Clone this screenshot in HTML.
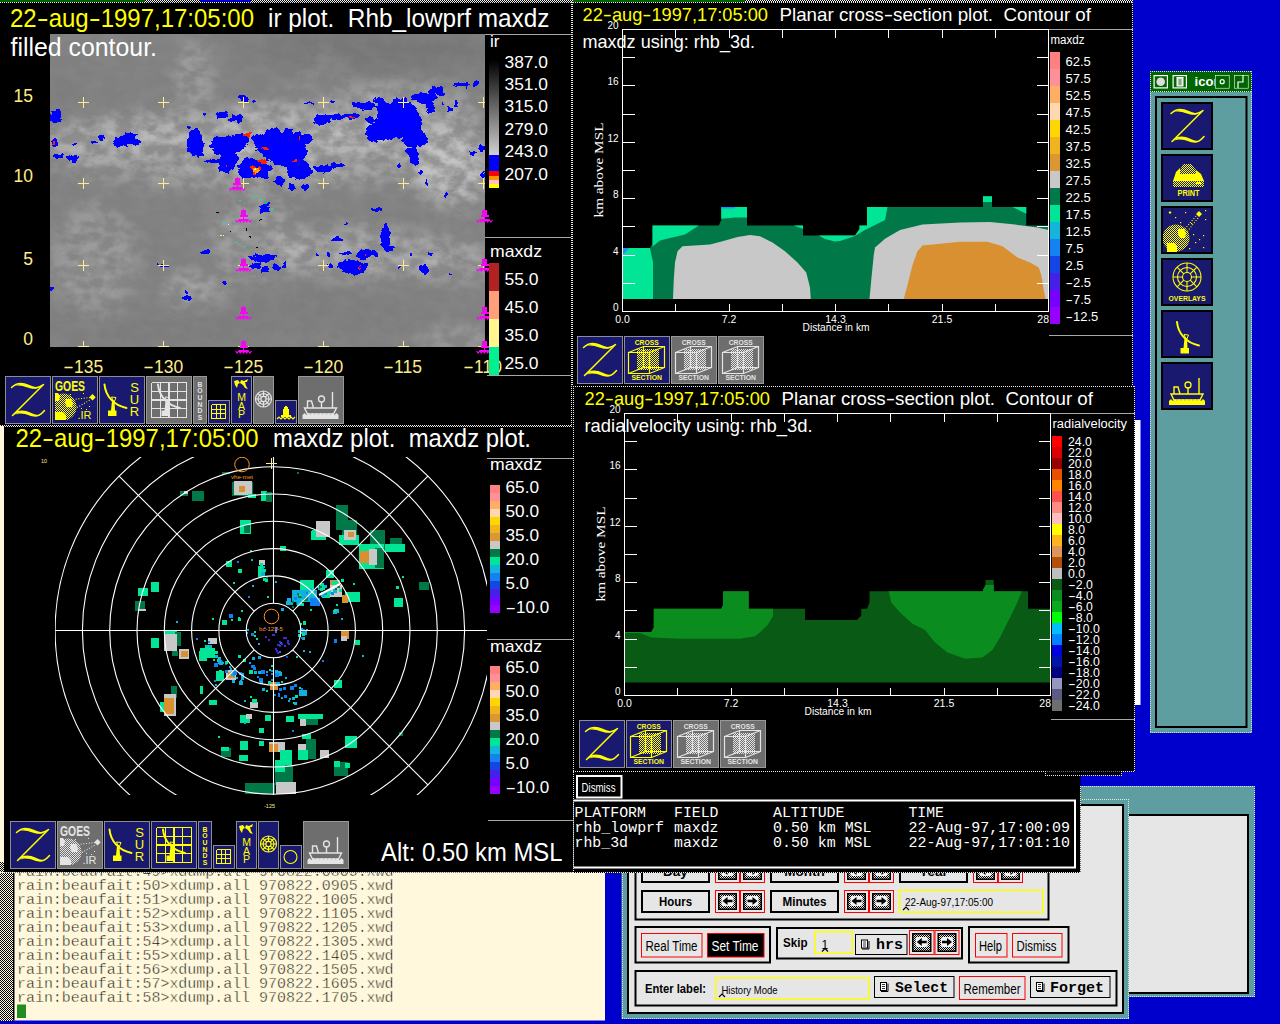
<!DOCTYPE html>
<html lang="en"><head><meta charset="utf-8"><title>zeb display</title>
<style>
html,body{margin:0;padding:0;background:#0000cd;overflow:hidden}
svg{display:block}
text{white-space:pre}
</style></head><body>
<svg width="1280" height="1024" viewBox="0 0 1280 1024">
<defs>
<pattern id="dy" width="2" height="2" patternUnits="userSpaceOnUse"><rect width="2" height="2" fill="none"/><rect width="1" height="1" fill="#ffff00"/><rect x="1" y="1" width="1" height="1" fill="#ffff00"/></pattern>
<pattern id="dg" width="2" height="2" patternUnits="userSpaceOnUse"><rect width="1" height="1" fill="#e4e4e4"/><rect x="1" y="1" width="1" height="1" fill="#e4e4e4"/></pattern>
<pattern id="sb" width="2" height="2" patternUnits="userSpaceOnUse"><rect width="2" height="2" fill="#fff8dc"/><rect width="1" height="1" fill="#000"/><rect x="1" y="1" width="1" height="1" fill="#000"/></pattern>
<pattern id="ab" width="2" height="2" patternUnits="userSpaceOnUse"><rect width="2" height="2" fill="#e6e6e6"/><rect width="1" height="1" fill="#000"/><rect x="1" y="1" width="1" height="1" fill="#000"/></pattern>
</defs>
<defs><pattern id="wd" width="2" height="2" patternUnits="userSpaceOnUse"><rect width="2" height="2" fill="#000"/><rect width="1" height="1" fill="#fff"/><rect x="1" y="1" width="1" height="1" fill="#fff"/></pattern></defs>
<rect x="0" y="0" width="1133" height="2" fill="url(#wd)" shape-rendering="crispEdges"/>
<rect x="0" y="0" width="145" height="2" fill="#006400" />
<rect x="200" y="0" width="51" height="2" fill="#0000cd" />
<rect x="573" y="0" width="172" height="2" fill="#006400" />
<rect x="0" y="426" width="605" height="594.5" fill="#fff8dc" />
<rect x="0" y="862" width="13" height="158.5" fill="url(#sb)" shape-rendering="crispEdges"/>
<rect x="13" y="873" width="1.5" height="147.5" fill="#000" />
<text x="17" y="875.5" font-size="15" fill="#000" font-family='"Liberation Mono", monospace' textLength="376.5" lengthAdjust="spacingAndGlyphs" stroke="#fff8dc" stroke-width="0.45" xml:space="preserve">rain:beaufait:49&gt;xdump.all 970822.0805.xwd</text>
<text x="17" y="889.5" font-size="15" fill="#000" font-family='"Liberation Mono", monospace' textLength="376.5" lengthAdjust="spacingAndGlyphs" stroke="#fff8dc" stroke-width="0.45" xml:space="preserve">rain:beaufait:50&gt;xdump.all 970822.0905.xwd</text>
<text x="17" y="903.5" font-size="15" fill="#000" font-family='"Liberation Mono", monospace' textLength="376.5" lengthAdjust="spacingAndGlyphs" stroke="#fff8dc" stroke-width="0.45" xml:space="preserve">rain:beaufait:51&gt;xdump.all 970822.1005.xwd</text>
<text x="17" y="917.5" font-size="15" fill="#000" font-family='"Liberation Mono", monospace' textLength="376.5" lengthAdjust="spacingAndGlyphs" stroke="#fff8dc" stroke-width="0.45" xml:space="preserve">rain:beaufait:52&gt;xdump.all 970822.1105.xwd</text>
<text x="17" y="931.5" font-size="15" fill="#000" font-family='"Liberation Mono", monospace' textLength="376.5" lengthAdjust="spacingAndGlyphs" stroke="#fff8dc" stroke-width="0.45" xml:space="preserve">rain:beaufait:53&gt;xdump.all 970822.1205.xwd</text>
<text x="17" y="945.5" font-size="15" fill="#000" font-family='"Liberation Mono", monospace' textLength="376.5" lengthAdjust="spacingAndGlyphs" stroke="#fff8dc" stroke-width="0.45" xml:space="preserve">rain:beaufait:54&gt;xdump.all 970822.1305.xwd</text>
<text x="17" y="959.5" font-size="15" fill="#000" font-family='"Liberation Mono", monospace' textLength="376.5" lengthAdjust="spacingAndGlyphs" stroke="#fff8dc" stroke-width="0.45" xml:space="preserve">rain:beaufait:55&gt;xdump.all 970822.1405.xwd</text>
<text x="17" y="973.5" font-size="15" fill="#000" font-family='"Liberation Mono", monospace' textLength="376.5" lengthAdjust="spacingAndGlyphs" stroke="#fff8dc" stroke-width="0.45" xml:space="preserve">rain:beaufait:56&gt;xdump.all 970822.1505.xwd</text>
<text x="17" y="987.5" font-size="15" fill="#000" font-family='"Liberation Mono", monospace' textLength="376.5" lengthAdjust="spacingAndGlyphs" stroke="#fff8dc" stroke-width="0.45" xml:space="preserve">rain:beaufait:57&gt;xdump.all 970822.1605.xwd</text>
<text x="17" y="1001.5" font-size="15" fill="#000" font-family='"Liberation Mono", monospace' textLength="376.5" lengthAdjust="spacingAndGlyphs" stroke="#fff8dc" stroke-width="0.45" xml:space="preserve">rain:beaufait:58&gt;xdump.all 970822.1705.xwd</text>
<rect x="17" y="1004.5" width="9" height="13.5" fill="#228b22" />
<rect x="1080" y="786" width="174.5" height="211" fill="#5f9ea0" />
<line x1="1080" y1="786.5" x2="1254.5" y2="786.5" stroke="#e0ecec" stroke-width="1" stroke-dasharray="1 1" shape-rendering="crispEdges"/>
<line x1="1254" y1="786" x2="1254" y2="997" stroke="#e0ecec" stroke-width="1" stroke-dasharray="1 1" shape-rendering="crispEdges"/>
<line x1="1080" y1="996.5" x2="1254.5" y2="996.5" stroke="#e0ecec" stroke-width="1" stroke-dasharray="1 1" shape-rendering="crispEdges"/>
<rect x="1128" y="815" width="120" height="178" fill="#e6e6e6" stroke="#000" stroke-width="2" />
<rect x="621.5" y="799" width="507.5" height="220" fill="#5f9ea0" />
<line x1="621.5" y1="1018.5" x2="1129" y2="1018.5" stroke="#e0ecec" stroke-width="1" stroke-dasharray="1 1" shape-rendering="crispEdges"/>
<line x1="1128.5" y1="799" x2="1128.5" y2="1019" stroke="#e0ecec" stroke-width="1" stroke-dasharray="1 1" shape-rendering="crispEdges"/>
<line x1="622" y1="799" x2="622" y2="1019" stroke="#e0ecec" stroke-width="1" stroke-dasharray="1 1" shape-rendering="crispEdges"/>
<line x1="1080" y1="799.5" x2="1129" y2="799.5" stroke="#e0ecec" stroke-width="1" stroke-dasharray="1 1" shape-rendering="crispEdges"/>
<rect x="628" y="805" width="495" height="208" fill="#e6e6e6" stroke="#000" stroke-width="2" />
<rect x="635.5" y="841" width="413" height="78.5" fill="none" stroke="#000" stroke-width="2" />
<rect x="642" y="861" width="67" height="21" fill="none" stroke="#000" stroke-width="2" />
<text x="675.5" y="876.3" font-size="13.5" fill="#000" font-family='"Liberation Sans", sans-serif' font-weight="bold" text-anchor="middle"  xml:space="preserve">Day</text>
<rect x="715.5" y="860.5" width="24" height="22" fill="none" stroke="#ff0000" stroke-width="1" />
<rect x="718.75" y="863.75" width="17.5" height="15.5" fill="url(#ab)" stroke="#000" stroke-width="1.5" />
<rect x="721.5" y="866" width="12" height="10" fill="#f4f4f4" rx="2"/>
<path d="M722.5 871 l5 -4 v2.7 h5 v2.6 h-5 v2.7z" fill="#000"/>
<rect x="740.5" y="860.5" width="24" height="22" fill="none" stroke="#ff0000" stroke-width="1" />
<rect x="743.75" y="863.75" width="17.5" height="15.5" fill="url(#ab)" stroke="#000" stroke-width="1.5" />
<rect x="746.5" y="866" width="12" height="10" fill="#f4f4f4" rx="2"/>
<path d="M757.5 871 l-5 -4 v2.7 h-5 v2.6 h5 v2.7z" fill="#000"/>
<rect x="771" y="861" width="67" height="21" fill="none" stroke="#000" stroke-width="2" />
<text x="804.5" y="876.3" font-size="13.5" fill="#000" font-family='"Liberation Sans", sans-serif' font-weight="bold" text-anchor="middle"  xml:space="preserve">Month</text>
<rect x="844.5" y="860.5" width="24" height="22" fill="none" stroke="#ff0000" stroke-width="1" />
<rect x="847.75" y="863.75" width="17.5" height="15.5" fill="url(#ab)" stroke="#000" stroke-width="1.5" />
<rect x="850.5" y="866" width="12" height="10" fill="#f4f4f4" rx="2"/>
<path d="M851.5 871 l5 -4 v2.7 h5 v2.6 h-5 v2.7z" fill="#000"/>
<rect x="869.5" y="860.5" width="24" height="22" fill="none" stroke="#ff0000" stroke-width="1" />
<rect x="872.75" y="863.75" width="17.5" height="15.5" fill="url(#ab)" stroke="#000" stroke-width="1.5" />
<rect x="875.5" y="866" width="12" height="10" fill="#f4f4f4" rx="2"/>
<path d="M886.5 871 l-5 -4 v2.7 h-5 v2.6 h5 v2.7z" fill="#000"/>
<rect x="900" y="861" width="67" height="21" fill="none" stroke="#000" stroke-width="2" />
<text x="933.5" y="876.3" font-size="13.5" fill="#000" font-family='"Liberation Sans", sans-serif' font-weight="bold" text-anchor="middle"  xml:space="preserve">Year</text>
<rect x="973.5" y="860.5" width="24" height="22" fill="none" stroke="#ff0000" stroke-width="1" />
<rect x="976.75" y="863.75" width="17.5" height="15.5" fill="url(#ab)" stroke="#000" stroke-width="1.5" />
<rect x="979.5" y="866" width="12" height="10" fill="#f4f4f4" rx="2"/>
<path d="M980.5 871 l5 -4 v2.7 h5 v2.6 h-5 v2.7z" fill="#000"/>
<rect x="998.5" y="860.5" width="24" height="22" fill="none" stroke="#ff0000" stroke-width="1" />
<rect x="1001.75" y="863.75" width="17.5" height="15.5" fill="url(#ab)" stroke="#000" stroke-width="1.5" />
<rect x="1004.5" y="866" width="12" height="10" fill="#f4f4f4" rx="2"/>
<path d="M1015.5 871 l-5 -4 v2.7 h-5 v2.6 h5 v2.7z" fill="#000"/>
<rect x="642" y="891" width="67" height="21" fill="none" stroke="#000" stroke-width="2" />
<text x="675.5" y="906.3" font-size="13.5" fill="#000" font-family='"Liberation Sans", sans-serif' textLength="33" lengthAdjust="spacingAndGlyphs" font-weight="bold" text-anchor="middle"  xml:space="preserve">Hours</text>
<rect x="715.5" y="890.5" width="24" height="22" fill="none" stroke="#ff0000" stroke-width="1" />
<rect x="718.75" y="893.75" width="17.5" height="15.5" fill="url(#ab)" stroke="#000" stroke-width="1.5" />
<rect x="721.5" y="896" width="12" height="10" fill="#f4f4f4" rx="2"/>
<path d="M722.5 901 l5 -4 v2.7 h5 v2.6 h-5 v2.7z" fill="#000"/>
<rect x="740.5" y="890.5" width="24" height="22" fill="none" stroke="#ff0000" stroke-width="1" />
<rect x="743.75" y="893.75" width="17.5" height="15.5" fill="url(#ab)" stroke="#000" stroke-width="1.5" />
<rect x="746.5" y="896" width="12" height="10" fill="#f4f4f4" rx="2"/>
<path d="M757.5 901 l-5 -4 v2.7 h-5 v2.6 h5 v2.7z" fill="#000"/>
<rect x="771" y="891" width="67" height="21" fill="none" stroke="#000" stroke-width="2" />
<text x="804.5" y="906.3" font-size="13.5" fill="#000" font-family='"Liberation Sans", sans-serif' textLength="44" lengthAdjust="spacingAndGlyphs" font-weight="bold" text-anchor="middle"  xml:space="preserve">Minutes</text>
<rect x="844.5" y="890.5" width="24" height="22" fill="none" stroke="#ff0000" stroke-width="1" />
<rect x="847.75" y="893.75" width="17.5" height="15.5" fill="url(#ab)" stroke="#000" stroke-width="1.5" />
<rect x="850.5" y="896" width="12" height="10" fill="#f4f4f4" rx="2"/>
<path d="M851.5 901 l5 -4 v2.7 h5 v2.6 h-5 v2.7z" fill="#000"/>
<rect x="869.5" y="890.5" width="24" height="22" fill="none" stroke="#ff0000" stroke-width="1" />
<rect x="872.75" y="893.75" width="17.5" height="15.5" fill="url(#ab)" stroke="#000" stroke-width="1.5" />
<rect x="875.5" y="896" width="12" height="10" fill="#f4f4f4" rx="2"/>
<path d="M886.5 901 l-5 -4 v2.7 h-5 v2.6 h5 v2.7z" fill="#000"/>
<rect x="899.75" y="890.25" width="143" height="22" fill="none" stroke="#ffff00" stroke-width="1.5" />
<text x="905" y="906" font-size="11.5" fill="#000" font-family='"Liberation Sans", sans-serif' textLength="88" lengthAdjust="spacingAndGlyphs"  xml:space="preserve">22-Aug-97,17:05:00</text>
<path d="M903 910 l3 -3 l3 3" fill="none" stroke="#000" stroke-width="1.2"/>
<rect x="635.5" y="927" width="134.5" height="35.5" fill="none" stroke="#000" stroke-width="2" />
<rect x="641.5" y="933.5" width="60.5" height="23.5" fill="none" stroke="#ff0000" stroke-width="1" />
<text x="645.5" y="951" font-size="14" fill="#000" font-family='"Liberation Sans", sans-serif' textLength="52" lengthAdjust="spacingAndGlyphs"  xml:space="preserve">Real Time</text>
<rect x="707.5" y="933.5" width="56.5" height="23.5" fill="#000" stroke="#ff0000" stroke-width="1" />
<text x="711.5" y="951" font-size="14" fill="#fff" font-family='"Liberation Sans", sans-serif' textLength="47" lengthAdjust="spacingAndGlyphs"  xml:space="preserve">Set Time</text>
<rect x="777" y="928" width="185" height="30.5" fill="none" stroke="#000" stroke-width="2" />
<text x="783" y="947" font-size="13.5" fill="#000" font-family='"Liberation Sans", sans-serif' textLength="24.5" lengthAdjust="spacingAndGlyphs" font-weight="bold"  xml:space="preserve">Skip</text>
<rect x="814.75" y="931.75" width="37.5" height="21.5" fill="none" stroke="#ffff00" stroke-width="1.5" />
<text x="821.5" y="949" font-size="12" fill="#000" font-family='"Liberation Sans", sans-serif'  xml:space="preserve">1</text>
<path d="M822 951.5 l3 -3 l3 3" fill="none" stroke="#000" stroke-width="1.2"/>
<rect x="855.5" y="934.5" width="51.5" height="20" fill="none" stroke="#000" stroke-width="1" />
<rect x="861.5" y="940" width="6" height="8" fill="#fff" stroke="#000" stroke-width="1" />
<path d="M863 942.0 h3 M863 944.0 h3 M863 946.0 h3" stroke="#000" stroke-width="0.8"/>
<path d="M862 949.0 h7 v-8" stroke="#000" stroke-width="1" fill="none"/>
<text x="876" y="949" font-size="15" fill="#000" font-family='"Liberation Mono", monospace' textLength="27" lengthAdjust="spacingAndGlyphs" font-weight="bold"  xml:space="preserve">hrs</text>
<rect x="909.5" y="930.5" width="24.5" height="24" fill="none" stroke="#ff0000" stroke-width="1" />
<rect x="912.75" y="933.75" width="18" height="17.5" fill="url(#ab)" stroke="#000" stroke-width="1.5" />
<rect x="915.75" y="937" width="12" height="10" fill="#f4f4f4" rx="2"/>
<path d="M916.75 942 l5 -4 v2.7 h5 v2.6 h-5 v2.7z" fill="#000"/>
<rect x="935" y="930.5" width="24" height="24" fill="none" stroke="#ff0000" stroke-width="1" />
<rect x="938.25" y="933.75" width="17.5" height="17.5" fill="url(#ab)" stroke="#000" stroke-width="1.5" />
<rect x="941" y="937" width="12" height="10" fill="#f4f4f4" rx="2"/>
<path d="M952 942 l-5 -4 v2.7 h-5 v2.6 h5 v2.7z" fill="#000"/>
<rect x="969" y="927" width="99.5" height="35.5" fill="none" stroke="#000" stroke-width="2" />
<rect x="975.5" y="933.5" width="31.5" height="23.5" fill="none" stroke="#ff0000" stroke-width="1" />
<text x="979" y="951" font-size="14" fill="#000" font-family='"Liberation Sans", sans-serif' textLength="23" lengthAdjust="spacingAndGlyphs"  xml:space="preserve">Help</text>
<rect x="1012.5" y="933.5" width="49.5" height="23.5" fill="none" stroke="#ff0000" stroke-width="1" />
<text x="1016.5" y="951" font-size="14" fill="#000" font-family='"Liberation Sans", sans-serif' textLength="40" lengthAdjust="spacingAndGlyphs"  xml:space="preserve">Dismiss</text>
<rect x="635.5" y="971" width="481" height="34.5" fill="none" stroke="#000" stroke-width="2" />
<text x="645" y="993" font-size="13.5" fill="#000" font-family='"Liberation Sans", sans-serif' textLength="61" lengthAdjust="spacingAndGlyphs" font-weight="bold"  xml:space="preserve">Enter label:</text>
<rect x="715.75" y="977.75" width="153" height="21.5" fill="none" stroke="#ffff00" stroke-width="1.5" />
<text x="721.5" y="993.5" font-size="11.5" fill="#000" font-family='"Liberation Sans", sans-serif' textLength="56" lengthAdjust="spacingAndGlyphs"  xml:space="preserve">History Mode</text>
<path d="M719 997 l3 -3 l3 3" fill="none" stroke="#000" stroke-width="1.2"/>
<rect x="874.5" y="976.5" width="79.5" height="21" fill="none" stroke="#000" stroke-width="1" />
<rect x="880.5" y="982.5" width="6" height="8" fill="#fff" stroke="#000" stroke-width="1" />
<path d="M882 984.5 h3 M882 986.5 h3 M882 988.5 h3" stroke="#000" stroke-width="0.8"/>
<path d="M881 991.5 h7 v-8" stroke="#000" stroke-width="1" fill="none"/>
<text x="895" y="991.5" font-size="15" fill="#000" font-family='"Liberation Mono", monospace' textLength="53" lengthAdjust="spacingAndGlyphs" font-weight="bold"  xml:space="preserve">Select</text>
<rect x="959.5" y="976.5" width="65.5" height="23" fill="none" stroke="#ff0000" stroke-width="1" />
<text x="963.5" y="994" font-size="14" fill="#000" font-family='"Liberation Sans", sans-serif' textLength="57" lengthAdjust="spacingAndGlyphs"  xml:space="preserve">Remember</text>
<rect x="1030.5" y="976.5" width="79.5" height="21" fill="none" stroke="#000" stroke-width="1" />
<rect x="1036.5" y="982.5" width="6" height="8" fill="#fff" stroke="#000" stroke-width="1" />
<path d="M1038 984.5 h3 M1038 986.5 h3 M1038 988.5 h3" stroke="#000" stroke-width="0.8"/>
<path d="M1037 991.5 h7 v-8" stroke="#000" stroke-width="1" fill="none"/>
<text x="1050" y="991.5" font-size="15" fill="#000" font-family='"Liberation Mono", monospace' textLength="54" lengthAdjust="spacingAndGlyphs" font-weight="bold"  xml:space="preserve">Forget</text>
<rect x="573" y="771" width="507.5" height="102" fill="#000" />
<line x1="573" y1="872.5" x2="1080.5" y2="872.5" stroke="#e8e8e8" stroke-width="1" stroke-dasharray="1 1" shape-rendering="crispEdges"/>
<line x1="1080" y1="786" x2="1080" y2="873" stroke="#e8e8e8" stroke-width="1" stroke-dasharray="1 1" shape-rendering="crispEdges"/>
<rect x="573" y="800.5" width="502" height="67" fill="none" stroke="#fff" stroke-width="2" />
<rect x="577" y="776" width="44.5" height="21.5" fill="none" stroke="#fff" stroke-width="2" />
<text x="581.5" y="791.5" font-size="12.5" fill="#fff" font-family='"Liberation Sans", sans-serif' textLength="34" lengthAdjust="spacingAndGlyphs"  xml:space="preserve">Dismiss</text>
<text x="574.5" y="817" font-size="15" fill="#fff" font-family='"Liberation Mono", monospace' textLength="71.5" lengthAdjust="spacingAndGlyphs"  xml:space="preserve">PLATFORM</text>
<text x="674" y="817" font-size="15" fill="#fff" font-family='"Liberation Mono", monospace' textLength="44.5" lengthAdjust="spacingAndGlyphs"  xml:space="preserve">FIELD</text>
<text x="773" y="817" font-size="15" fill="#fff" font-family='"Liberation Mono", monospace' textLength="71.5" lengthAdjust="spacingAndGlyphs"  xml:space="preserve">ALTITUDE</text>
<text x="908.5" y="817" font-size="15" fill="#fff" font-family='"Liberation Mono", monospace' textLength="35.5" lengthAdjust="spacingAndGlyphs"  xml:space="preserve">TIME</text>
<text x="574.5" y="832" font-size="15" fill="#fff" font-family='"Liberation Mono", monospace' textLength="89.5" lengthAdjust="spacingAndGlyphs"  xml:space="preserve">rhb_lowprf</text>
<text x="674" y="832" font-size="15" fill="#fff" font-family='"Liberation Mono", monospace' textLength="44.5" lengthAdjust="spacingAndGlyphs"  xml:space="preserve">maxdz</text>
<text x="773" y="832" font-size="15" fill="#fff" font-family='"Liberation Mono", monospace' textLength="98.5" lengthAdjust="spacingAndGlyphs"  xml:space="preserve">0.50 km MSL</text>
<text x="908.5" y="832" font-size="15" fill="#fff" font-family='"Liberation Mono", monospace' textLength="161.5" lengthAdjust="spacingAndGlyphs"  xml:space="preserve">22-Aug-97,17:00:09</text>
<text x="574.5" y="847" font-size="15" fill="#fff" font-family='"Liberation Mono", monospace' textLength="53.5" lengthAdjust="spacingAndGlyphs"  xml:space="preserve">rhb_3d</text>
<text x="674" y="847" font-size="15" fill="#fff" font-family='"Liberation Mono", monospace' textLength="44.5" lengthAdjust="spacingAndGlyphs"  xml:space="preserve">maxdz</text>
<text x="773" y="847" font-size="15" fill="#fff" font-family='"Liberation Mono", monospace' textLength="98.5" lengthAdjust="spacingAndGlyphs"  xml:space="preserve">0.50 km MSL</text>
<text x="908.5" y="847" font-size="15" fill="#fff" font-family='"Liberation Mono", monospace' textLength="161.5" lengthAdjust="spacingAndGlyphs"  xml:space="preserve">22-Aug-97,17:01:10</text>
<rect x="1135" y="420" width="5.5" height="285" fill="#fff" />
<rect x="1150" y="71" width="102" height="21" fill="#006400" />
<rect x="1150" y="92" width="102" height="641" fill="#5f9ea0" />
<line x1="1150" y1="71.5" x2="1252" y2="71.5" stroke="#d8e8d8" stroke-width="1" stroke-dasharray="1 1" shape-rendering="crispEdges"/>
<line x1="1150.5" y1="71" x2="1150.5" y2="733" stroke="#d0e0e0" stroke-width="1" stroke-dasharray="1 1" shape-rendering="crispEdges"/>
<line x1="1251.5" y1="71" x2="1251.5" y2="733" stroke="#d0e0e0" stroke-width="1" stroke-dasharray="1 1" shape-rendering="crispEdges"/>
<line x1="1150" y1="732.5" x2="1252" y2="732.5" stroke="#d0e0e0" stroke-width="1" stroke-dasharray="1 1" shape-rendering="crispEdges"/>
<line x1="1150" y1="91.5" x2="1252" y2="91.5" stroke="#d8e8d8" stroke-width="1" stroke-dasharray="1 1" shape-rendering="crispEdges"/>
<rect x="1154.1" y="75.6" width="13.3" height="12.3" fill="none" stroke="#fff" stroke-width="1.2" />
<rect x="1173.1" y="75.6" width="13.3" height="12.3" fill="none" stroke="#fff" stroke-width="1.2" />
<rect x="1215.6" y="75.6" width="13.3" height="12.3" fill="none" stroke="#fff" stroke-width="1.2" />
<rect x="1234.6" y="75.6" width="13.3" height="12.3" fill="none" stroke="#fff" stroke-width="1.2" />
<circle cx="1160.7" cy="81.7" r="4.3" fill="#dcdcdc"/>
<rect x="1177" y="77.5" width="6" height="8.5" fill="#dcdcdc" stroke="#fff" stroke-width="1" />
<path d="M1178.5 80 h3 M1178.5 82 h3 M1178.5 84 h3" stroke="#006400" stroke-width="0.8"/>
<text x="1194.5" y="86" font-size="13" fill="#fff" font-family='"Liberation Sans", sans-serif' textLength="27" lengthAdjust="spacingAndGlyphs" font-weight="bold"  xml:space="preserve">icon</text>
<rect x="1215.6" y="75.6" width="13.3" height="12.3" fill="#006400" />
<circle cx="1222.2" cy="81.7" r="2" fill="none" stroke="#fff" stroke-width="1.2"/>
<rect x="1234.6" y="75.6" width="13.3" height="12.3" fill="#006400" />
<path d="M1238 88 V82 H1243 V75" fill="none" stroke="#fff" stroke-width="1.2"/>
<rect x="1156" y="97" width="90.5" height="630" fill="none" stroke="#000" stroke-width="2" />
<rect x="1161" y="102" width="52" height="48" fill="#000" />
<rect x="1163" y="104" width="48" height="44" fill="#191970" />
<g transform="translate(1165 102.5) scale(1 1)">
<path d="M6 11 C11 6 17 6 23 9 S32 12 38 8 L7 39 C13 33 19 34 25 37 S34 40 39 34" fill="none" stroke="#ffff00" stroke-width="1.5" stroke-linejoin="round" stroke-linecap="round"/>
<path d="M9 9.5 C14 6.5 18 7 23 9 S31 11.5 36 9.5 C31 13.5 27 12.5 22 11 S14 8.5 9 9.5Z M10 38 C14 34 19 34.5 25 37 S33 39.5 37 36.5 C33 41.5 28 40.5 24 39 S14 36 10 38Z" fill="#ffff00"/>
</g>
<rect x="1161" y="154" width="52" height="48" fill="#000" />
<rect x="1163" y="156" width="48" height="44" fill="#191970" />
<g transform="translate(1165 155) scale(1 1)">
<path d="M18 9 H26 L31 15 V19 H15 V15 Z" fill="url(#dy)"/>
<path d="M11 17 L15 13 V19 H31 V15 L36 19 L39 26 H8 Z" fill="#ffff00"/>
<rect x="8" y="26" width="31" height="6" fill="url(#dy)"/>
<rect x="31" y="27" width="5" height="2" fill="#ffff00"/>
<text x="23.5" y="41" font-size="8.5" font-weight="bold" font-family='"Liberation Sans", sans-serif' fill="#ffff00" text-anchor="middle" textLength="22" lengthAdjust="spacingAndGlyphs">PRINT</text>
</g>
<rect x="1161" y="206" width="52" height="48" fill="#000" />
<rect x="1163" y="208" width="48" height="44" fill="#191970" />
<g transform="translate(1163 208) scale(1 1)">
<defs><clipPath id="spc"><rect x="0" y="0" width="48" height="44"/></clipPath></defs><g clip-path="url(#spc)">
<circle cx="13" cy="30" r="13.5" fill="url(#dy)"/>
<path d="M4 35 h8 l2 3 v6 h-10z M15 21 h6 l2 4 l-1 5 h-5 l-2 -4z" fill="#ffff00"/>
<path d="M33 8 L21 22 M35 10 L24 24" stroke="#ffff00" stroke-width="1.1" stroke-dasharray="1 1.7" fill="none"/>
<path d="M36 3 l3 3 l-3 3 l-3 -3z M7 3 l1.5 1.5 l-1.5 1.5 l-1.5 -1.5z" fill="#ffff00"/>
<rect x="22" y="4" width="1.2" height="1.2" fill="#ffff00"/>
<rect x="42" y="2" width="1.2" height="1.2" fill="#ffff00"/>
<rect x="42" y="11" width="1.2" height="1.2" fill="#ffff00"/>
<rect x="40" y="27" width="1.2" height="1.2" fill="#ffff00"/>
<rect x="36" y="31" width="1.2" height="1.2" fill="#ffff00"/>
<rect x="30" y="26" width="1.2" height="1.2" fill="#ffff00"/>
<rect x="40" y="39" width="1.2" height="1.2" fill="#ffff00"/>
<rect x="32" y="34" width="1.2" height="1.2" fill="#ffff00"/>
<rect x="17" y="14" width="1.2" height="1.2" fill="#ffff00"/>
<rect x="26" y="40" width="1.2" height="1.2" fill="#ffff00"/>
<rect x="28" y="15" width="1.2" height="1.2" fill="#ffff00"/>
<rect x="12" y="9" width="1.2" height="1.2" fill="#ffff00"/>
</g>
</g>
<rect x="1161" y="258" width="52" height="48" fill="#000" />
<rect x="1163" y="260" width="48" height="44" fill="#191970" />
<g transform="translate(1165 258) scale(1 1)">
<g fill="none" stroke="#ffff00" stroke-width="1.1"><circle cx="22" cy="19" r="14"/><circle cx="22" cy="19" r="9.52"/><circle cx="22" cy="19" r="4.48"/>
<path d="M26.5 19.0 L36.0 19.0 M25.2 22.2 L31.9 28.9 M22.0 23.5 L22.0 33.0 M18.8 22.2 L12.1 28.9 M17.5 19.0 L8.0 19.0 M18.8 15.8 L12.1 9.1 M22.0 14.5 L22.0 5.0 M25.2 15.8 L31.9 9.1 "/></g>
<text x="22" y="42.5" font-size="8" fill="#ffff00" font-family='"Liberation Sans", sans-serif' textLength="37" lengthAdjust="spacingAndGlyphs" font-weight="bold" text-anchor="middle"  xml:space="preserve">OVERLAYS</text>
</g>
<rect x="1161" y="310" width="52" height="48" fill="#000" />
<rect x="1163" y="312" width="48" height="44" fill="#191970" />
<g transform="translate(1162 314) scale(1 1)">
<path d="M15 8 C16 19 24 29 37 31.5" fill="none" stroke="#ffff00" stroke-width="2" stroke-linecap="round"/>
<path d="M22 20.5 L26.5 21 L24.5 26 Z" fill="none" stroke="#ffff00" stroke-width="1"/>
<path d="M22.5 24 L25 24 L25.5 34 L27 34 L27 39.5 L18.5 39.5 L18.5 34 L21.5 34 Z" fill="#ffff00"/>
</g>
<rect x="1161" y="362" width="52" height="48" fill="#000" />
<rect x="1163" y="364" width="48" height="44" fill="#191970" />
<g transform="translate(1165 363) scale(1 1)">
<g transform="translate(0 0)">
<path d="M6 31 H38 L35 37 H9 Z" fill="none" stroke="#ffff00" stroke-width="1.4"/>
<path d="M9 31 V24 H13 L15 31" fill="none" stroke="#ffff00" stroke-width="1.4"/>
<circle cx="23" cy="22" r="3" fill="none" stroke="#ffff00" stroke-width="1.3"/>
<path d="M23 25 V31 M34 15 V31" stroke="#ffff00" stroke-width="1.4" fill="none"/>
<path d="M4 42 V38 l2 -2 l2 2 l2 -2 l2 2 l2 -2 l2 2 l2 -2 l2 2 l2 -2 l2 2 l2 -2 l2 2 l2 -2 l2 2 l2 -2 l2 2 l2 -2 l2 2 V42 Z" fill="#ffff00"/>
</g>
</g>
<rect x="0" y="2" width="573" height="424" fill="#000" />
<line x1="571.5" y1="2" x2="571.5" y2="426" stroke="#e8e8e8" stroke-width="1" stroke-dasharray="1 1" shape-rendering="crispEdges"/>
<line x1="0" y1="425.5" x2="572" y2="425.5" stroke="#e8e8e8" stroke-width="1" stroke-dasharray="1 1" shape-rendering="crispEdges"/>
<line x1="0" y1="2.5" x2="572" y2="2.5" stroke="#e8e8e8" stroke-width="1" stroke-dasharray="1 1" shape-rendering="crispEdges"/>
<defs><clipPath id="irclip"><rect x="50" y="34" width="435" height="313"/></clipPath>
<filter id="cloud" x="0" y="0" width="100%" height="100%" filterUnits="objectBoundingBox" color-interpolation-filters="sRGB">
<feTurbulence type="fractalNoise" baseFrequency="0.06 0.09" numOctaves="4" seed="3" result="n"/>
<feColorMatrix in="n" type="matrix" values="0 0 0 0 1  0 0 0 0 1  0 0 0 0 1  2.6 0 0 0 -0.85" result="a"/>
<feComposite in="SourceGraphic" in2="a" operator="in"/>
</filter>
<filter id="rag" x="-5%" y="-5%" width="110%" height="110%"><feTurbulence type="fractalNoise" baseFrequency="0.13" numOctaves="2" seed="4" result="t"/><feDisplacementMap in="SourceGraphic" in2="t" scale="7" xChannelSelector="R" yChannelSelector="G"/></filter>
<filter id="bl6" x="-100%" y="-100%" width="300%" height="300%"><feGaussianBlur stdDeviation="6"/></filter>
<filter id="bl10" x="-100%" y="-100%" width="300%" height="300%"><feGaussianBlur stdDeviation="10"/></filter>
</defs>
<g clip-path="url(#irclip)">
<g>
<rect x="50" y="34" width="435" height="313" fill="#808080" />
<ellipse cx="381.4" cy="49.8" rx="118.6" ry="21.6" fill="#767676" opacity="0.85" filter="url(#bl10)"/>
<ellipse cx="255.6" cy="44.4" rx="43.1" ry="10.8" fill="#7a7a7a" opacity="0.5" filter="url(#bl10)"/>
<ellipse cx="147.8" cy="328.3" rx="107.8" ry="18.0" fill="#7a7a7a" opacity="0.6" filter="url(#bl10)"/>
<ellipse cx="327.5" cy="313.9" rx="107.8" ry="18.0" fill="#7c7c7c" opacity="0.6" filter="url(#bl10)"/>
<ellipse cx="68.8" cy="94.7" rx="21.6" ry="18.0" fill="#7a7a7a" opacity="0.5" filter="url(#bl10)"/>
<ellipse cx="270.0" cy="148.6" rx="230.0" ry="39.5" fill="#a4a4a4" opacity="0.275" filter="url(#bl10)"/>
<ellipse cx="453.3" cy="173.8" rx="43.1" ry="32.3" fill="#a4a4a4" opacity="0.45" filter="url(#bl10)"/>
<ellipse cx="399.4" cy="123.4" rx="79.1" ry="32.3" fill="#a4a4a4" opacity="0.3" filter="url(#bl10)"/>
<ellipse cx="270.0" cy="137.8" rx="71.9" ry="32.3" fill="#a4a4a4" opacity="0.25" filter="url(#bl10)"/>
<ellipse cx="194.5" cy="76.7" rx="18.0" ry="39.5" fill="#a4a4a4" opacity="0.225" filter="url(#bl10)"/>
<ellipse cx="129.8" cy="137.8" rx="79.1" ry="16.2" fill="#a4a4a4" opacity="0.25" filter="url(#bl10)"/>
<ellipse cx="356.2" cy="252.8" rx="86.2" ry="25.2" fill="#a4a4a4" opacity="0.3" filter="url(#bl10)"/>
<ellipse cx="255.6" cy="238.4" rx="46.7" ry="43.1" fill="#a4a4a4" opacity="0.2" filter="url(#bl10)"/>
<ellipse cx="194.5" cy="288.8" rx="32.3" ry="18.0" fill="#a4a4a4" opacity="0.25" filter="url(#bl10)"/>
<ellipse cx="93.9" cy="260.0" rx="43.1" ry="57.5" fill="#a4a4a4" opacity="0.175" filter="url(#bl10)"/>
<ellipse cx="453.3" cy="260.0" rx="43.1" ry="21.6" fill="#a4a4a4" opacity="0.25" filter="url(#bl10)"/>
<ellipse cx="453.3" cy="339.1" rx="43.1" ry="9.0" fill="#a4a4a4" opacity="0.25" filter="url(#bl10)"/>
<ellipse cx="327.5" cy="65.9" rx="21.6" ry="9.0" fill="#a4a4a4" opacity="0.125" filter="url(#bl10)"/>
<ellipse cx="381.4" cy="94.7" rx="107.8" ry="10.8" fill="#a4a4a4" opacity="0.15" filter="url(#bl10)"/>
</g>
<g filter="url(#cloud)">
<rect x="50" y="34" width="435" height="313" fill="#d0d0d0" opacity="0.06"/>
<ellipse cx="270.0" cy="148.6" rx="230.0" ry="39.5" fill="#d0d0d0" opacity="0.396" filter="url(#bl10)"/>
<ellipse cx="453.3" cy="173.8" rx="43.1" ry="32.3" fill="#d0d0d0" opacity="0.648" filter="url(#bl10)"/>
<ellipse cx="399.4" cy="123.4" rx="79.1" ry="32.3" fill="#d0d0d0" opacity="0.432" filter="url(#bl10)"/>
<ellipse cx="270.0" cy="137.8" rx="71.9" ry="32.3" fill="#d0d0d0" opacity="0.36" filter="url(#bl10)"/>
<ellipse cx="194.5" cy="76.7" rx="18.0" ry="39.5" fill="#d0d0d0" opacity="0.324" filter="url(#bl10)"/>
<ellipse cx="129.8" cy="137.8" rx="79.1" ry="16.2" fill="#d0d0d0" opacity="0.36" filter="url(#bl10)"/>
<ellipse cx="356.2" cy="252.8" rx="86.2" ry="25.2" fill="#d0d0d0" opacity="0.432" filter="url(#bl10)"/>
<ellipse cx="255.6" cy="238.4" rx="46.7" ry="43.1" fill="#d0d0d0" opacity="0.288" filter="url(#bl10)"/>
<ellipse cx="194.5" cy="288.8" rx="32.3" ry="18.0" fill="#d0d0d0" opacity="0.36" filter="url(#bl10)"/>
<ellipse cx="93.9" cy="260.0" rx="43.1" ry="57.5" fill="#d0d0d0" opacity="0.252" filter="url(#bl10)"/>
<ellipse cx="453.3" cy="260.0" rx="43.1" ry="21.6" fill="#d0d0d0" opacity="0.36" filter="url(#bl10)"/>
<ellipse cx="453.3" cy="339.1" rx="43.1" ry="9.0" fill="#d0d0d0" opacity="0.36" filter="url(#bl10)"/>
<ellipse cx="327.5" cy="65.9" rx="21.6" ry="9.0" fill="#d0d0d0" opacity="0.18" filter="url(#bl10)"/>
<ellipse cx="381.4" cy="94.7" rx="107.8" ry="10.8" fill="#d0d0d0" opacity="0.216" filter="url(#bl10)"/>
</g>
<g shape-rendering="crispEdges" filter="url(#rag)">
<polygon points="305,145 306,147 303,148 302,150 301,151 297,152 298,153 297,155 296,157 292,156 292,158 289,158 289,162 287,162 284,161 282,165 279,165 276,164 274,164 272,161 270,160 267,161 266,158 265,157 263,156 263,154 260,153 259,152 256,151 257,149 256,148 256,147 254,145 254,143 255,142 251,139 252,137 253,136 255,134 259,134 261,133 263,132 266,132 266,129 270,130 271,128 275,130 276,128 279,128 281,132 283,131 286,129 288,130 292,129 292,131 294,133 298,132 301,133 301,135 301,137 303,138 308,139 307,141 303,143" fill="#0000ff"/>
<polygon points="245,145 245,146 246,148 242,149 242,150 239,151 236,151 235,152 232,152 230,153 228,153 225,154 222,154 219,153 215,154 213,153 213,151 210,150 212,148 211,147 209,146 210,144 212,143 209,141 212,141 213,139 213,137 216,137 219,137 222,137 225,137 228,136 230,137 233,137 234,138 237,139 240,139 241,140 244,141 247,142 245,144" fill="#0000ff"/>
<polygon points="238,159 238,162 236,164 235,166 234,168 233,170 231,169 230,172 228,172 227,172 225,172 224,171 222,170 220,170 220,166 219,164 220,161 219,159 220,156 220,154 221,152 221,149 222,148 224,146 225,144 227,143 228,144 230,146 232,146 232,150 233,151 234,152 236,154 236,156" fill="#0000ff"/>
<polygon points="272,169 272,171 270,172 269,174 269,176 267,177 264,177 261,177 259,178 257,177 254,178 252,178 249,180 246,179 243,179 243,177 239,176 239,175 237,173 239,171 236,170 240,169 239,167 239,166 239,164 240,163 242,162 243,160 246,159 249,160 252,159 255,159 257,159 259,161 262,161 264,162 265,163 267,164 268,165 271,166 272,168" fill="#0000ff"/>
<polygon points="311,169 312,172 311,174 309,176 307,177 305,178 303,179 301,179 299,180 298,178 295,180 294,178 291,178 290,176 290,173 289,172 290,169 290,168 290,165 292,164 293,163 294,161 295,159 297,159 299,159 302,158 304,160 305,161 307,162 307,164 309,166 309,168" fill="#0000ff"/>
<polygon points="307,154 306,156 305,158 302,158 301,160 299,161 297,162 297,164 295,166 293,167 291,167 288,168 285,167 283,166 281,166 279,164 278,162 276,161 275,160 274,158 274,157 271,156 270,154 271,152 273,151 273,149 271,146 275,146 275,144 278,143 281,143 283,142 286,144 288,144 290,143 292,145 295,143 296,145 298,145 300,146 304,147 305,149 306,150 307,152" fill="#0000ff"/>
<polygon points="312,140 311,141 309,142 308,143 305,143 303,142 300,143 297,142 297,140 297,139 299,138 300,136 302,136 305,135 308,135 309,137 311,138" fill="#0000ff"/>
<polygon points="219,162 222,163 219,164 215,164 212,164 210,164 206,164 205,163 204,162 204,160 207,159 209,159 212,159 216,159 217,160 220,160" fill="#0000ff"/>
<polygon points="285,181 285,182 283,183 281,185 278,184 275,184 273,182 272,181 274,180 275,178 277,177 280,178 282,179 284,180" fill="#0000ff"/>
<polygon points="297,187 295,188 294,189 292,191 290,189 287,188 287,187 287,185 289,184 292,184 294,184 296,185" fill="#0000ff"/>
<polygon points="308,187 308,189 306,190 304,190 301,189 301,187 300,186 302,184 304,184 306,183 308,185" fill="#0000ff"/>
<polygon points="335,168 333,169 331,170 329,171 328,172 324,172 321,171 317,171 315,170 315,169 313,168 315,167 315,166 318,166 321,165 324,166 327,165 330,166 333,166 335,167" fill="#0000ff"/>
<polygon points="344,165 343,166 341,167 338,167 335,167 333,166 331,165 333,164 335,163 338,164 341,163 345,164" fill="#0000ff"/>
<polygon points="243,118 243,120 242,121 240,122 237,123 235,121 232,122 231,121 228,120 228,118 228,117 231,116 232,115 234,114 237,115 240,114 241,116 243,117" fill="#0000ff"/>
<polygon points="227,115 227,116 225,117 223,118 220,118 217,118 217,116 217,115 216,113 217,112 220,111 223,111 225,112 228,113" fill="#0000ff"/>
<polygon points="249,98 248,100 246,102 244,102 241,102 239,102 239,99 238,97 239,95 241,95 244,95 246,95 247,97" fill="#0000ff"/>
<polygon points="258,102 256,103 254,104 252,103 251,102 252,101 254,100 256,101" fill="#0000ff"/>
<polygon points="207,113 207,115 205,116 204,115 203,113 204,112 205,111 206,112" fill="#0000ff"/>
<polygon points="189,127 189,128 187,129 186,128 185,127 186,126 187,125 188,126" fill="#0000ff"/>
<polygon points="283,136 283,138 279,139 278,140 279,142 275,142 272,142 269,141 267,141 264,141 262,140 259,140 260,138 256,137 256,136 260,135 261,134 262,132 265,132 267,132 269,131 272,130 274,132 279,131 280,132 281,134 282,135" fill="#0000ff"/>
<polygon points="248,138 248,139 247,140 246,142 243,143 240,141 237,142 235,140 233,139 232,138 233,136 234,135 237,134 240,134 243,134 246,134 248,135 250,136" fill="#0000ff"/>
<polygon points="203,142 204,145 203,147 202,150 202,152 200,154 198,153 197,156 196,155 195,155 193,156 192,155 190,154 189,152 187,151 187,148 187,145 187,142 187,139 189,138 189,135 189,133 191,131 192,129 193,129 194,128 196,127 197,129 199,131 200,131 201,133 201,135 203,137 203,140" fill="#0000ff"/>
<polygon points="204,153 204,155 201,156 199,157 197,157 195,155 193,154 195,152 195,150 197,149 199,149 201,150 202,152" fill="#0000ff"/>
<polygon points="420,120 421,122 422,124 421,126 420,127 421,130 420,132 417,133 417,135 414,135 411,135 409,136 407,136 405,136 404,139 401,137 399,139 397,138 396,135 393,139 391,138 390,135 386,137 385,135 383,134 379,134 380,131 378,130 375,129 375,126 376,124 374,122 375,120 377,118 380,116 379,114 381,113 383,112 385,111 384,109 386,109 387,106 387,104 389,103 391,103 393,100 395,100 397,98 399,99 402,97 405,97 407,99 408,102 409,104 413,102 414,104 415,106 415,109 415,111 418,111 418,113 419,115 420,116 421,118" fill="#0000ff"/>
<polygon points="400,132 403,134 402,136 400,137 395,137 393,138 391,139 389,140 388,141 385,140 383,142 380,141 378,141 374,142 371,142 369,141 367,139 366,138 366,136 365,135 364,134 364,132 367,131 367,130 365,128 366,127 367,125 370,125 372,123 374,123 377,122 380,123 383,122 386,122 387,124 390,125 392,125 395,126 395,127 397,128 398,130 402,131" fill="#0000ff"/>
<polygon points="425,138 427,140 426,142 425,144 423,145 421,146 418,145 417,146 415,147 413,146 411,147 408,148 406,147 404,145 403,143 402,142 401,140 403,138 404,136 403,134 404,133 404,131 406,129 408,127 410,127 412,126 415,128 417,128 419,129 421,130 423,131 423,133 424,134 425,136" fill="#0000ff"/>
<polygon points="415,110 414,111 412,112 412,113 411,114 408,115 407,116 404,116 401,116 399,118 396,119 393,118 390,118 387,118 384,118 381,117 378,116 378,115 376,114 379,112 376,111 374,110 377,109 377,108 374,107 374,105 378,105 378,103 382,103 384,102 387,102 391,102 393,103 396,102 399,103 402,103 403,104 406,104 411,104 412,105 414,106 415,107 417,108" fill="#0000ff"/>
<polygon points="420,154 419,157 419,160 418,162 417,164 415,165 413,164 411,163 410,162 409,159 408,157 407,154 407,151 409,150 410,148 412,148 413,145 415,144 416,146 417,148 418,150 419,152" fill="#0000ff"/>
<polygon points="403,165 401,166 400,168 398,167 397,166 397,164 398,162 400,162 401,163" fill="#0000ff"/>
<polygon points="438,98 433,99 433,100 432,101 431,102 429,103 426,104 423,104 421,102 419,101 417,101 416,100 412,100 413,98 411,97 412,96 415,95 419,95 420,93 423,93 426,94 429,94 433,93 434,95 435,96 434,97" fill="#0000ff"/>
<polygon points="444,92 443,93 442,95 439,95 436,95 434,96 431,95 429,94 428,93 427,92 429,91 429,89 431,88 434,87 437,88 439,89 441,90 441,91" fill="#0000ff"/>
<polygon points="433,106 433,109 433,113 431,113 430,113 429,111 427,112 427,109 426,106 427,103 428,101 429,101 430,99 431,98 432,102 433,104" fill="#0000ff"/>
<polygon points="378,105 375,106 374,107 370,107 370,109 366,109 362,110 360,108 356,108 356,107 353,107 352,106 353,105 350,104 354,103 357,103 360,103 363,103 366,103 369,102 372,103 376,104 374,105" fill="#0000ff"/>
<polygon points="384,100 384,102 381,103 379,103 376,102 374,102 372,101 373,100 373,99 376,98 378,99 382,98 384,99" fill="#0000ff"/>
<polygon points="453,109 452,111 450,111 447,111 447,109 447,107 450,107 452,107" fill="#0000ff"/>
<polygon points="459,104 458,106 457,107 455,107 455,104 455,101 457,101 458,102" fill="#0000ff"/>
<polygon points="470,84 469,85 468,86 464,86 461,86 457,86 454,85 454,84 457,84 458,83 461,83 464,83 467,83 468,84" fill="#0000ff"/>
<polygon points="443,89 443,91 440,91 437,91 434,91 434,89 436,88 437,87 440,88 442,88" fill="#0000ff"/>
<polygon points="477,84 476,86 475,86 473,85 473,84 474,83 475,82 476,82" fill="#0000ff"/>
<polygon points="330,120 331,122 329,123 327,124 324,124 322,124 318,125 315,124 314,122 315,121 315,119 317,118 316,116 318,114 321,115 324,115 327,116 327,118 331,118" fill="#0000ff"/>
<polygon points="356,117 355,117 354,118 354,118 353,119 349,119 346,119 342,119 338,119 336,118 332,119 331,118 327,118 326,117 324,117 324,116 327,116 328,115 331,115 335,114 339,114 342,115 346,114 349,114 354,114 355,115 357,115 359,116" fill="#0000ff"/>
<polygon points="360,117 358,118 356,119 354,119 351,120 348,119 347,118 349,117 348,116 351,115 354,115 357,115 359,116" fill="#0000ff"/>
<polygon points="376,120 377,121 374,122 372,123 369,123 367,122 365,121 365,120 366,119 367,118 369,116 372,117 374,117 375,119" fill="#0000ff"/>
<polygon points="314,104 313,105 310,105 307,105 303,105 301,104 302,103 304,103 307,102 311,102 313,103" fill="#0000ff"/>
<polygon points="334,102 333,103 331,104 329,103 328,102 329,101 331,100 333,101" fill="#0000ff"/>
<polygon points="486,149 485,151 483,152 482,152 480,152 479,150 479,148 480,146 482,145 483,145 484,147" fill="#0000ff"/>
<polygon points="477,152 476,153 473,154 471,153 470,152 470,151 473,151 475,151" fill="#0000ff"/>
<polygon points="485,174 485,177 483,178 481,177 480,174 481,173 483,171 484,172" fill="#0000ff"/>
<polygon points="422,172 422,176 421,175 420,175 419,172 420,170 421,168 422,170" fill="#0000ff"/>
<polygon points="428,183 428,186 426,187 425,186 425,183 425,180 426,180 427,181" fill="#0000ff"/>
<polygon points="447,195 447,197 445,198 444,197 444,195 444,194 445,193 447,194" fill="#0000ff"/>
<polygon points="61,117 63,119 61,121 60,122 57,122 55,123 53,123 51,121 49,121 48,119 46,117 50,115 51,114 51,112 53,112 55,109 58,110 60,112 60,114 62,115" fill="#0000ff"/>
<polygon points="58,143 57,145 56,146 54,147 52,147 51,146 50,144 50,142 50,141 52,139 54,139 56,140 58,141" fill="#0000ff"/>
<polygon points="77,158 77,159 77,161 74,162 71,161 69,161 68,159 65,158 67,157 69,156 71,155 73,156 77,155 78,157" fill="#0000ff"/>
<polygon points="64,156 61,157 59,157 56,158 54,157 54,156 54,155 57,154 60,154 63,154" fill="#0000ff"/>
<polygon points="138,140 140,141 138,143 137,144 134,145 131,145 129,145 126,146 124,145 121,146 118,145 116,144 114,143 113,141 114,140 115,139 115,137 118,137 118,135 121,135 123,133 126,134 129,134 132,134 134,135 135,136 136,138 137,139" fill="#0000ff"/>
<polygon points="122,144 121,145 118,146 117,147 114,146 113,144 113,143 115,141 117,141 118,141 121,142" fill="#0000ff"/>
<polygon points="138,135 136,136 134,138 132,137 129,136 129,134 131,133 134,133 136,133" fill="#0000ff"/>
<polygon points="105,138 104,139 102,140 99,140 97,139 98,137 99,135 102,136 104,136" fill="#0000ff"/>
<polygon points="96,142 95,143 94,144 92,144 91,142 92,141 94,140 95,141" fill="#0000ff"/>
<polygon points="81,144 78,144 76,145 73,145 72,144 73,143 76,142 79,143" fill="#0000ff"/>
<polygon points="269,209 270,212 267,212 266,213 264,213 261,213 261,211 261,209 260,207 261,205 263,203 266,204 267,206 269,207" fill="#0000ff"/>
<polygon points="271,202 270,204 267,205 265,204 264,202 265,201 267,201 269,201" fill="#0000ff"/>
<polygon points="390,237 390,239 390,242 390,245 389,247 388,249 386,249 385,249 384,249 383,247 381,246 381,243 380,241 379,239 378,237 379,234 380,231 380,229 381,228 383,227 384,226 385,224 386,224 388,224 389,227 390,229 390,232 391,234" fill="#0000ff"/>
<polygon points="393,248 391,249 390,250 388,251 386,250 384,249 384,247 386,245 388,245 390,246 393,246" fill="#0000ff"/>
<polygon points="379,254 377,255 376,256 371,256 370,257 368,258 365,258 362,259 360,258 356,257 356,256 357,254 355,254 356,252 357,251 358,250 359,249 363,250 365,249 368,249 371,250 372,251 376,251 376,252" fill="#0000ff"/>
<polygon points="362,267 361,268 361,270 360,271 360,273 357,274 354,275 352,275 349,274 347,273 345,272 343,271 342,270 340,269 337,268 337,266 338,265 339,263 343,263 344,262 346,260 349,261 352,260 354,260 358,260 360,261 360,263 362,264 361,266" fill="#0000ff"/>
<polygon points="367,268 365,269 365,271 363,272 362,274 359,274 357,273 355,272 354,270 354,269 352,267 354,265 355,264 357,263 359,263 361,264 364,263 366,264 368,266" fill="#0000ff"/>
<polygon points="343,239 343,240 342,241 339,241 336,241 335,240 332,240 332,239 334,238 337,237 339,237 341,237 343,238" fill="#0000ff"/>
<polygon points="351,254 351,255 349,256 345,255 343,255 340,255 338,254 341,253 343,252 345,251 349,251 351,253" fill="#0000ff"/>
<polygon points="334,266 333,268 331,268 329,268 327,266 329,265 331,264 333,265" fill="#0000ff"/>
<polygon points="429,270 428,272 426,273 424,274 422,273 420,272 419,271 419,269 420,267 422,266 424,265 426,267 427,268" fill="#0000ff"/>
<polygon points="380,210 379,211 377,212 374,212 372,211 371,209 374,208 377,208 380,208" fill="#0000ff"/>
<polygon points="350,224 349,225 347,226 346,226 345,224 346,223 347,222 349,223" fill="#0000ff"/>
<polygon points="276,258 275,259 275,260 273,261 271,261 269,262 266,262 263,262 260,262 257,261 256,261 254,260 252,260 249,259 249,258 248,257 248,256 251,256 255,255 257,254 260,254 263,255 266,255 269,255 273,255 275,256 277,256 276,257" fill="#0000ff"/>
<polygon points="261,265 260,267 260,268 257,269 254,269 252,268 250,267 248,265 250,264 252,263 254,262 257,263 260,263 261,264" fill="#0000ff"/>
<polygon points="281,267 280,268 278,270 275,270 273,268 274,267 275,265 278,265 280,266" fill="#0000ff"/>
<polygon points="269,269 267,271 265,271 262,271 262,269 263,267 265,267 267,267" fill="#0000ff"/>
<polygon points="286,265 286,268 284,268 283,268 282,265 283,263 284,262 286,263" fill="#0000ff"/>
<polygon points="209,252 209,253 206,254 203,254 200,253 202,251 203,250 206,249 209,250" fill="#0000ff"/>
<polygon points="192,298 191,299 190,301 187,301 184,300 183,299 183,297 185,296 187,295 189,296 191,297" fill="#0000ff"/>
<polygon points="189,292 188,292 187,293 185,292 185,292 185,291 187,290 188,291" fill="#0000ff"/>
<polygon points="227,283 227,284 225,285 223,284 222,283 223,282 225,281 227,282" fill="#0000ff"/>
<polygon points="168,265 167,266 165,267 161,267 159,266 156,266 155,265 157,264 161,264 165,264 168,265" fill="#0000ff"/>
<polygon points="53,289 52,291 51,291 50,292 48,292 47,290 47,288 48,286 50,285 51,286 53,286" fill="#0000ff"/>
<polygon points="330,255 329,256 328,256 326,256 326,255 326,254 328,253 329,254" fill="#0000ff"/>
<polygon points="318,255 318,256 317,256 316,256 316,255 316,254 317,254 318,255" fill="#0000ff"/>
<polygon points="411,253 411,254 410,254 409,254 409,253 409,252 410,252 411,252" fill="#0000ff"/>
<polygon points="431,255 431,255 430,256 429,256 429,255 429,254 430,253 431,254" fill="#0000ff"/>
<polygon points="451,273 450,274 449,274 447,274 448,273 447,272 449,272 450,273" fill="#0000ff"/>
<polygon points="401,267 400,268 399,268 398,268 398,267 398,267 399,266 401,267" fill="#0000ff"/>
<polygon points="446,104 445,105 444,105 443,104 443,104 443,103 444,102 445,103" fill="#0000ff"/>
<polygon points="469,88 469,88 468,88 466,88 466,88 466,87 468,86 469,87" fill="#0000ff"/>
<polygon points="251,154 251,156 249,157 246,158 244,156 241,157 240,155 241,153 242,152 244,151 246,150 248,151 250,152" fill="#a2a2a2"/>
<polygon points="252,135 250,136 249,137 246,137 244,136 243,135 245,134 248,134 251,134" fill="#ff2000"/>
<polygon points="269,149 267,150 265,150 261,150 261,149 262,148 265,147 267,147" fill="#ff2000"/>
<polygon points="266,160 266,162 264,163 260,162 259,161 258,159 261,158 264,158 266,159" fill="#ff2000"/>
<polygon points="296,161 295,162 293,162 292,162 291,161 292,160 293,160 295,160" fill="#ff2000"/>
<polygon points="301,138 301,139 299,140 299,139 298,138 298,136 299,136 301,136" fill="#ff2000"/>
<polygon points="354,117 354,118 352,118 351,118 350,117 351,117 352,116 354,116" fill="#ff2000"/>
<polygon points="54,143 54,145 53,145 51,145 50,143 51,142 53,141 54,141" fill="#ff2000"/>
<polygon points="226,167 226,168 225,168 225,168 224,167 225,166 225,165 226,166" fill="#ff2000"/>
<polygon points="366,255 366,255 365,255 365,255 365,255 365,254 365,254 366,254" fill="#ff2000"/>
<polygon points="361,267 361,268 360,269 359,268 359,267 359,266 360,266 361,266" fill="#ff2000"/>
<polygon points="261,169 260,171 258,172 257,174 255,174 252,174 252,172 251,170 250,168 250,166 253,165 255,165 257,166 259,166 261,168" fill="#ff2000"/>
<polygon points="258,169 259,172 257,173 255,172 252,172 252,169 253,168 255,166 257,166 258,168" fill="#ff9a00"/>
<polygon points="256,169 256,170 255,170 254,170 254,169 254,168 255,167 256,168" fill="#ffff40"/>
<rect x="256" y="196" width="2" height="1" fill="#00f090" />
<rect x="260" y="199" width="2" height="1" fill="#00f090" />
<rect x="264" y="201" width="2" height="1" fill="#00c878" />
<rect x="252" y="199" width="2" height="1" fill="#00f090" />
<rect x="223" y="222" width="2" height="1" fill="#00f090" />
<rect x="227" y="224" width="2" height="1" fill="#fff080" />
<rect x="221" y="234" width="2" height="1" fill="#fff080" />
<rect x="237" y="240" width="2" height="1" fill="#00f090" />
<rect x="243" y="246" width="2" height="1" fill="#00f090" />
<rect x="247" y="248" width="2" height="1" fill="#00c878" />
<rect x="241" y="253" width="2" height="1" fill="#00f090" />
<rect x="230" y="231" width="2" height="1" fill="#000" />
<rect x="216" y="210" width="2" height="1" fill="#000" />
<rect x="245" y="229" width="2" height="1" fill="#000" />
<rect x="250" y="237" width="2" height="1" fill="#000" />
<rect x="256" y="246" width="2" height="1" fill="#000" />
<rect x="259" y="220" width="2" height="1" fill="#000" />
<rect x="270" y="209" width="2" height="1" fill="#00f090" />
<rect x="239" y="199" width="2" height="1" fill="#00f090" />
</g>
<path d="M78 102.5 h11 M83.5 97 v11 M78 183.5 h11 M83.5 178 v11 M78 265.5 h11 M83.5 260 v11 M78 346.5 h11 M83.5 341 v11 M158 102.5 h11 M163.5 97 v11 M158 183.5 h11 M163.5 178 v11 M158 265.5 h11 M163.5 260 v11 M158 346.5 h11 M163.5 341 v11 M238 102.5 h11 M243.5 97 v11 M238 183.5 h11 M243.5 178 v11 M238 265.5 h11 M243.5 260 v11 M238 346.5 h11 M243.5 341 v11 M318 102.5 h11 M323.5 97 v11 M318 183.5 h11 M323.5 178 v11 M318 265.5 h11 M323.5 260 v11 M318 346.5 h11 M323.5 341 v11 M398 102.5 h11 M403.5 97 v11 M398 183.5 h11 M403.5 178 v11 M398 265.5 h11 M403.5 260 v11 M398 346.5 h11 M403.5 341 v11 M478 102.5 h11 M483.5 97 v11 M478 183.5 h11 M483.5 178 v11 M478 265.5 h11 M483.5 260 v11 M478 346.5 h11 M483.5 341 v11 " stroke="#ffec8b" stroke-width="1" fill="none" shape-rendering="crispEdges"/>
</g>
<g transform="translate(237 177)" fill="#ff00ff"><path d="M-0.5 0 h1 v1 h2 v5 h1.5 v1.5 h-3.5 v2 h3.5 l1.5 2 h-11 l1.5 -2 h3.5 v-2 h-3.5 v-1.5 h1.5 v-5 h2z" shape-rendering="crispEdges"/><path d="M-8 11 l1.6 2 l1.6 -2 l1.6 2 l1.6 -2 l1.6 2 l1.6 -2 l1.6 2 l1.6 -2 l1.6 2 l1.6 -2" stroke="#ff00ff" stroke-width="1.1" fill="none"/><path d="M-1 2.5 v3 M1 2.5 v3" stroke="#8a4a8a" stroke-width="0.8"/></g>
<g transform="translate(243.5 209)" fill="#ff00ff"><path d="M-0.5 0 h1 v1 h2 v5 h1.5 v1.5 h-3.5 v2 h3.5 l1.5 2 h-11 l1.5 -2 h3.5 v-2 h-3.5 v-1.5 h1.5 v-5 h2z" shape-rendering="crispEdges"/><path d="M-8 11 l1.6 2 l1.6 -2 l1.6 2 l1.6 -2 l1.6 2 l1.6 -2 l1.6 2 l1.6 -2 l1.6 2 l1.6 -2" stroke="#ff00ff" stroke-width="1.1" fill="none"/><path d="M-1 2.5 v3 M1 2.5 v3" stroke="#8a4a8a" stroke-width="0.8"/></g>
<g transform="translate(243.5 258)" fill="#ff00ff"><path d="M-0.5 0 h1 v1 h2 v5 h1.5 v1.5 h-3.5 v2 h3.5 l1.5 2 h-11 l1.5 -2 h3.5 v-2 h-3.5 v-1.5 h1.5 v-5 h2z" shape-rendering="crispEdges"/><path d="M-8 11 l1.6 2 l1.6 -2 l1.6 2 l1.6 -2 l1.6 2 l1.6 -2 l1.6 2 l1.6 -2 l1.6 2 l1.6 -2" stroke="#ff00ff" stroke-width="1.1" fill="none"/><path d="M-1 2.5 v3 M1 2.5 v3" stroke="#8a4a8a" stroke-width="0.8"/></g>
<g transform="translate(243.5 306)" fill="#ff00ff"><path d="M-0.5 0 h1 v1 h2 v5 h1.5 v1.5 h-3.5 v2 h3.5 l1.5 2 h-11 l1.5 -2 h3.5 v-2 h-3.5 v-1.5 h1.5 v-5 h2z" shape-rendering="crispEdges"/><path d="M-8 11 l1.6 2 l1.6 -2 l1.6 2 l1.6 -2 l1.6 2 l1.6 -2 l1.6 2 l1.6 -2 l1.6 2 l1.6 -2" stroke="#ff00ff" stroke-width="1.1" fill="none"/><path d="M-1 2.5 v3 M1 2.5 v3" stroke="#8a4a8a" stroke-width="0.8"/></g>
<g transform="translate(243.5 340)" fill="#ff00ff"><path d="M-0.5 0 h1 v1 h2 v5 h1.5 v1.5 h-3.5 v2 h3.5 l1.5 2 h-11 l1.5 -2 h3.5 v-2 h-3.5 v-1.5 h1.5 v-5 h2z" shape-rendering="crispEdges"/><path d="M-8 11 l1.6 2 l1.6 -2 l1.6 2 l1.6 -2 l1.6 2 l1.6 -2 l1.6 2 l1.6 -2 l1.6 2 l1.6 -2" stroke="#ff00ff" stroke-width="1.1" fill="none"/><path d="M-1 2.5 v3 M1 2.5 v3" stroke="#8a4a8a" stroke-width="0.8"/></g>
<g transform="translate(484.5 209)" fill="#ff00ff"><path d="M-0.5 0 h1 v1 h2 v5 h1.5 v1.5 h-3.5 v2 h3.5 l1.5 2 h-11 l1.5 -2 h3.5 v-2 h-3.5 v-1.5 h1.5 v-5 h2z" shape-rendering="crispEdges"/><path d="M-8 11 l1.6 2 l1.6 -2 l1.6 2 l1.6 -2 l1.6 2 l1.6 -2 l1.6 2 l1.6 -2 l1.6 2 l1.6 -2" stroke="#ff00ff" stroke-width="1.1" fill="none"/><path d="M-1 2.5 v3 M1 2.5 v3" stroke="#8a4a8a" stroke-width="0.8"/></g>
<g transform="translate(484.5 258)" fill="#ff00ff"><path d="M-0.5 0 h1 v1 h2 v5 h1.5 v1.5 h-3.5 v2 h3.5 l1.5 2 h-11 l1.5 -2 h3.5 v-2 h-3.5 v-1.5 h1.5 v-5 h2z" shape-rendering="crispEdges"/><path d="M-8 11 l1.6 2 l1.6 -2 l1.6 2 l1.6 -2 l1.6 2 l1.6 -2 l1.6 2 l1.6 -2 l1.6 2 l1.6 -2" stroke="#ff00ff" stroke-width="1.1" fill="none"/><path d="M-1 2.5 v3 M1 2.5 v3" stroke="#8a4a8a" stroke-width="0.8"/></g>
<g transform="translate(484.5 306)" fill="#ff00ff"><path d="M-0.5 0 h1 v1 h2 v5 h1.5 v1.5 h-3.5 v2 h3.5 l1.5 2 h-11 l1.5 -2 h3.5 v-2 h-3.5 v-1.5 h1.5 v-5 h2z" shape-rendering="crispEdges"/><path d="M-8 11 l1.6 2 l1.6 -2 l1.6 2 l1.6 -2 l1.6 2 l1.6 -2 l1.6 2 l1.6 -2 l1.6 2 l1.6 -2" stroke="#ff00ff" stroke-width="1.1" fill="none"/><path d="M-1 2.5 v3 M1 2.5 v3" stroke="#8a4a8a" stroke-width="0.8"/></g>
<g transform="translate(484.5 340)" fill="#ff00ff"><path d="M-0.5 0 h1 v1 h2 v5 h1.5 v1.5 h-3.5 v2 h3.5 l1.5 2 h-11 l1.5 -2 h3.5 v-2 h-3.5 v-1.5 h1.5 v-5 h2z" shape-rendering="crispEdges"/><path d="M-8 11 l1.6 2 l1.6 -2 l1.6 2 l1.6 -2 l1.6 2 l1.6 -2 l1.6 2 l1.6 -2 l1.6 2 l1.6 -2" stroke="#ff00ff" stroke-width="1.1" fill="none"/><path d="M-1 2.5 v3 M1 2.5 v3" stroke="#8a4a8a" stroke-width="0.8"/></g>
<text x="10" y="27" font-size="25" fill="#ffff00" font-family='"Liberation Sans", sans-serif' xml:space="preserve"><tspan textLength="26.67" lengthAdjust="spacingAndGlyphs">22</tspan><tspan textLength="11.99" lengthAdjust="spacingAndGlyphs">-</tspan><tspan textLength="40.01" lengthAdjust="spacingAndGlyphs">aug</tspan><tspan textLength="11.99" lengthAdjust="spacingAndGlyphs">-</tspan><tspan textLength="153.34" lengthAdjust="spacingAndGlyphs">1997,17:05:00</tspan></text>
<text x="268" y="27" font-size="25" fill="#fff" font-family='"Liberation Sans", sans-serif' textLength="281.5" lengthAdjust="spacingAndGlyphs"  xml:space="preserve">ir plot.  Rhb_lowprf maxdz</text>
<text x="10.5" y="56" font-size="25" fill="#fff" font-family='"Liberation Sans", sans-serif' textLength="146.5" lengthAdjust="spacingAndGlyphs"  xml:space="preserve">filled contour.</text>
<text x="33" y="101.5" font-size="17.5" fill="#ffec8b" font-family='"Liberation Sans", sans-serif' text-anchor="end"  xml:space="preserve">15</text>
<text x="33" y="182" font-size="17.5" fill="#ffec8b" font-family='"Liberation Sans", sans-serif' text-anchor="end"  xml:space="preserve">10</text>
<text x="33" y="264.5" font-size="17.5" fill="#ffec8b" font-family='"Liberation Sans", sans-serif' text-anchor="end"  xml:space="preserve">5</text>
<text x="33" y="345" font-size="17.5" fill="#ffec8b" font-family='"Liberation Sans", sans-serif' text-anchor="end"  xml:space="preserve">0</text>
<text x="63" y="372.6" font-size="17.5" fill="#ffec8b" font-family='"Liberation Sans", sans-serif' xml:space="preserve"><tspan textLength="11.00" lengthAdjust="spacingAndGlyphs">-</tspan><tspan textLength="29.20" lengthAdjust="spacingAndGlyphs">135</tspan></text>
<text x="143" y="372.6" font-size="17.5" fill="#ffec8b" font-family='"Liberation Sans", sans-serif' xml:space="preserve"><tspan textLength="11.00" lengthAdjust="spacingAndGlyphs">-</tspan><tspan textLength="29.20" lengthAdjust="spacingAndGlyphs">130</tspan></text>
<text x="223" y="372.6" font-size="17.5" fill="#ffec8b" font-family='"Liberation Sans", sans-serif' xml:space="preserve"><tspan textLength="11.00" lengthAdjust="spacingAndGlyphs">-</tspan><tspan textLength="29.20" lengthAdjust="spacingAndGlyphs">125</tspan></text>
<text x="303" y="372.6" font-size="17.5" fill="#ffec8b" font-family='"Liberation Sans", sans-serif' xml:space="preserve"><tspan textLength="11.00" lengthAdjust="spacingAndGlyphs">-</tspan><tspan textLength="29.20" lengthAdjust="spacingAndGlyphs">120</tspan></text>
<text x="383" y="372.6" font-size="17.5" fill="#ffec8b" font-family='"Liberation Sans", sans-serif' xml:space="preserve"><tspan textLength="11.00" lengthAdjust="spacingAndGlyphs">-</tspan><tspan textLength="27.90" lengthAdjust="spacingAndGlyphs">115</tspan></text>
<text x="463" y="372.6" font-size="17.5" fill="#ffec8b" font-family='"Liberation Sans", sans-serif' xml:space="preserve"><tspan textLength="11.00" lengthAdjust="spacingAndGlyphs">-</tspan><tspan textLength="27.90" lengthAdjust="spacingAndGlyphs">110</tspan></text>
<rect x="485" y="34" width="86" height="1" fill="#a8a8a8" shape-rendering="crispEdges"/>
<text x="490" y="47" font-size="17" fill="#fff" font-family='"Liberation Sans", sans-serif'  xml:space="preserve">ir</text>
<defs><linearGradient id="irg" x1="0" y1="0" x2="0" y2="1"><stop offset="0" stop-color="#000"/><stop offset="1" stop-color="#d0d0d0"/></linearGradient></defs>
<rect x="489" y="60" width="10" height="95" fill="url(#irg)" />
<rect x="489" y="155" width="10" height="16" fill="#0000ff" />
<rect x="489" y="171" width="10" height="5" fill="#ff0000" />
<rect x="489" y="176" width="10" height="4" fill="#ff9000" />
<rect x="489" y="180" width="10" height="4" fill="#ffc0c0" />
<rect x="489" y="184" width="10" height="4" fill="#ffff00" />
<text x="504.5" y="67.5" font-size="17" fill="#fff" font-family='"Liberation Sans", sans-serif' textLength="43.5" lengthAdjust="spacingAndGlyphs"  xml:space="preserve">387.0</text>
<text x="504.5" y="89.9" font-size="17" fill="#fff" font-family='"Liberation Sans", sans-serif' textLength="43.5" lengthAdjust="spacingAndGlyphs"  xml:space="preserve">351.0</text>
<text x="504.5" y="112.3" font-size="17" fill="#fff" font-family='"Liberation Sans", sans-serif' textLength="43.5" lengthAdjust="spacingAndGlyphs"  xml:space="preserve">315.0</text>
<text x="504.5" y="134.7" font-size="17" fill="#fff" font-family='"Liberation Sans", sans-serif' textLength="43.5" lengthAdjust="spacingAndGlyphs"  xml:space="preserve">279.0</text>
<text x="504.5" y="157.1" font-size="17" fill="#fff" font-family='"Liberation Sans", sans-serif' textLength="43.5" lengthAdjust="spacingAndGlyphs"  xml:space="preserve">243.0</text>
<text x="504.5" y="179.5" font-size="17" fill="#fff" font-family='"Liberation Sans", sans-serif' textLength="43.5" lengthAdjust="spacingAndGlyphs"  xml:space="preserve">207.0</text>
<rect x="485" y="237" width="86" height="1" fill="#a8a8a8" shape-rendering="crispEdges"/>
<text x="490" y="257" font-size="17" fill="#fff" font-family='"Liberation Sans", sans-serif' textLength="52" lengthAdjust="spacingAndGlyphs"  xml:space="preserve">maxdz</text>
<rect x="489" y="263" width="10" height="28" fill="#b22222" />
<rect x="489" y="291" width="10" height="28" fill="#ffa07a" />
<rect x="489" y="319" width="10" height="28" fill="#fff68f" />
<rect x="489" y="347" width="10" height="28" fill="#00f092" />
<text x="504.5" y="284.5" font-size="17" fill="#fff" font-family='"Liberation Sans", sans-serif' textLength="34" lengthAdjust="spacingAndGlyphs"  xml:space="preserve">55.0</text>
<text x="504.5" y="312.5" font-size="17" fill="#fff" font-family='"Liberation Sans", sans-serif' textLength="34" lengthAdjust="spacingAndGlyphs"  xml:space="preserve">45.0</text>
<text x="504.5" y="340.5" font-size="17" fill="#fff" font-family='"Liberation Sans", sans-serif' textLength="34" lengthAdjust="spacingAndGlyphs"  xml:space="preserve">35.0</text>
<text x="504.5" y="368.5" font-size="17" fill="#fff" font-family='"Liberation Sans", sans-serif' textLength="34" lengthAdjust="spacingAndGlyphs"  xml:space="preserve">25.0</text>
<rect x="487" y="375" width="84" height="1" fill="#a8a8a8" shape-rendering="crispEdges"/>
<rect x="5" y="376" width="46" height="48" fill="#8c8c94" shape-rendering="crispEdges"/>
<rect x="6" y="377" width="44" height="46" fill="#191970" shape-rendering="crispEdges"/>
<g transform="translate(5.5 376.5) scale(1 1)">
<path d="M6 11 C11 6 17 6 23 9 S32 12 38 8 L7 39 C13 33 19 34 25 37 S34 40 39 34" fill="none" stroke="#ffff00" stroke-width="1.5" stroke-linejoin="round" stroke-linecap="round"/>
<path d="M9 9.5 C14 6.5 18 7 23 9 S31 11.5 36 9.5 C31 13.5 27 12.5 22 11 S14 8.5 9 9.5Z M10 38 C14 34 19 34.5 25 37 S33 39.5 37 36.5 C33 41.5 28 40.5 24 39 S14 36 10 38Z" fill="#ffff00"/>
</g>
<rect x="52" y="376" width="46" height="48" fill="#8c8c94" shape-rendering="crispEdges"/>
<rect x="53" y="377" width="44" height="46" fill="#191970" shape-rendering="crispEdges"/>
<g transform="translate(52 376) scale(1 1)">
<text x="3" y="15" font-size="15" font-weight="bold" font-family='"Liberation Sans", sans-serif' fill="#ffff00" textLength="30" lengthAdjust="spacingAndGlyphs">GOES</text>
<text x="25.5" y="43.2" font-size="11" font-family='"Liberation Sans", sans-serif' fill="#ffff00" textLength="14" lengthAdjust="spacingAndGlyphs">.IR</text>
<defs><clipPath id="gclipdy"><rect x="3" y="16" width="30" height="28"/></clipPath></defs>
<g clip-path="url(#gclipdy)"><circle cx="11" cy="31" r="13.5" fill="url(#dy)"/>
<path d="M3 36 h8 l3 3 v5 h-11z M14 23 h5 l2 4 l-1 4 h-5 l-2 -4z M3 17 h3 l2 3 l-1 5 h-4z" fill="#ffff00"/></g>
<path d="M21 23.5 L38 21.5 M25 31.5 L39 23.5" stroke="#ffff00" stroke-width="1.1" stroke-dasharray="1 1.7" fill="none"/>
<path d="M40.5 18 l3.2 3.2 l-3.2 3.2 l-3.2 -3.2z" fill="#ffff00"/>
<rect x="18" y="18" width="1" height="1" fill="#ffff00"/>
<rect x="31" y="17" width="1" height="1" fill="#ffff00"/>
<rect x="37" y="30" width="1" height="1" fill="#ffff00"/>
<rect x="34" y="33" width="1" height="1" fill="#ffff00"/>
<rect x="29" y="32" width="1" height="1" fill="#ffff00"/>
</g>
<rect x="99" y="376" width="46" height="48" fill="#8c8c94" shape-rendering="crispEdges"/>
<rect x="100" y="377" width="44" height="46" fill="#191970" shape-rendering="crispEdges"/>
<g transform="translate(89.5 376.5) scale(1 1)">
<path d="M15 8 C16 19 24 29 37 31.5" fill="none" stroke="#ffff00" stroke-width="2" stroke-linecap="round"/>
<path d="M22 20.5 L26.5 21 L24.5 26 Z" fill="none" stroke="#ffff00" stroke-width="1"/>
<path d="M22.5 24 L25 24 L25.5 34 L27 34 L27 39.5 L18.5 39.5 L18.5 34 L21.5 34 Z" fill="#ffff00"/>
</g>
<g transform="translate(99 376) scale(1 1)">
<text x="35.5" y="16" font-size="13" font-family='"Liberation Sans", sans-serif' fill="#ffff00" text-anchor="middle" font-weight="normal">S</text>
<text x="35.5" y="28.2" font-size="13" font-family='"Liberation Sans", sans-serif' fill="#ffff00" text-anchor="middle" font-weight="normal">U</text>
<text x="35.5" y="40.4" font-size="13" font-family='"Liberation Sans", sans-serif' fill="#ffff00" text-anchor="middle" font-weight="normal">R</text>
</g>
<rect x="146" y="376" width="46" height="48" fill="#989898" shape-rendering="crispEdges"/>
<rect x="147" y="377" width="44" height="46" fill="#6e6e6e" shape-rendering="crispEdges"/>
<g transform="translate(146 376) scale(1 1)">
<path d="M5.5 6.5 h35.0 M5.5 6.5 v35.0 M5.5 15.25 h35.0 M14.25 6.5 v35.0 M5.5 24.0 h35.0 M23.0 6.5 v35.0 M5.5 32.75 h35.0 M31.75 6.5 v35.0 M5.5 41.5 h35.0 M40.5 6.5 v35.0 " stroke="#e4e4e4" stroke-width="1.4" fill="none" shape-rendering="crispEdges"/>
</g>
<g transform="translate(143 376.5) scale(1 1)">
<path d="M15 8 C16 19 24 29 37 31.5" fill="none" stroke="#e4e4e4" stroke-width="2" stroke-linecap="round"/>
<path d="M22 20.5 L26.5 21 L24.5 26 Z" fill="none" stroke="#e4e4e4" stroke-width="1"/>
<path d="M22.5 24 L25 24 L25.5 34 L27 34 L27 39.5 L18.5 39.5 L18.5 34 L21.5 34 Z" fill="#e4e4e4"/>
</g>
<rect x="193" y="376" width="14" height="48" fill="#989898" shape-rendering="crispEdges"/>
<rect x="194" y="377" width="12" height="46" fill="#6e6e6e" shape-rendering="crispEdges"/>
<g transform="translate(193 376) scale(1 1)">
<text x="7" y="10.5" font-size="6.8" font-family='"Liberation Sans", sans-serif' fill="#e4e4e4" text-anchor="middle" font-weight="bold">B</text>
<text x="7" y="17.2" font-size="6.8" font-family='"Liberation Sans", sans-serif' fill="#e4e4e4" text-anchor="middle" font-weight="bold">O</text>
<text x="7" y="23.9" font-size="6.8" font-family='"Liberation Sans", sans-serif' fill="#e4e4e4" text-anchor="middle" font-weight="bold">U</text>
<text x="7" y="30.6" font-size="6.8" font-family='"Liberation Sans", sans-serif' fill="#e4e4e4" text-anchor="middle" font-weight="bold">N</text>
<text x="7" y="37.3" font-size="6.8" font-family='"Liberation Sans", sans-serif' fill="#e4e4e4" text-anchor="middle" font-weight="bold">D</text>
<text x="7" y="44" font-size="6.8" font-family='"Liberation Sans", sans-serif' fill="#e4e4e4" text-anchor="middle" font-weight="bold">S</text>
</g>
<rect x="208" y="400" width="22" height="24" fill="#8c8c94" shape-rendering="crispEdges"/>
<rect x="209" y="401" width="20" height="22" fill="#191970" shape-rendering="crispEdges"/>
<g transform="translate(208 400) scale(1 1)">
<path d="M3.5 4.5 h14.100000000000001 M3.5 4.5 v14.100000000000001 M3.5 9.2 h14.100000000000001 M8.2 4.5 v14.100000000000001 M3.5 13.9 h14.100000000000001 M12.9 4.5 v14.100000000000001 M3.5 18.6 h14.100000000000001 M17.6 4.5 v14.100000000000001 " stroke="#ffff00" stroke-width="1.1" fill="none" shape-rendering="crispEdges"/>
</g>
<rect x="231" y="376" width="21" height="48" fill="#8c8c94" shape-rendering="crispEdges"/>
<rect x="232" y="377" width="19" height="46" fill="#191970" shape-rendering="crispEdges"/>
<g transform="translate(231 376) scale(1 1)">
<path d="M3 5 l4 -1 l2 3 l-2 1 l-1 4 l-2 -3z M10 4 l3 1 l4 -2 l-1 3 l-2 0 l1 4 l2 3 l-3 -1 l-2 -3 l-3 -2z" fill="#ffff00"/>
<text x="10.5" y="25" font-size="10.5" font-family='"Liberation Sans", sans-serif' fill="#ffff00" text-anchor="middle" font-weight="normal">M</text>
<text x="10.5" y="33.6" font-size="10.5" font-family='"Liberation Sans", sans-serif' fill="#ffff00" text-anchor="middle" font-weight="normal">A</text>
<text x="10.5" y="42.2" font-size="10.5" font-family='"Liberation Sans", sans-serif' fill="#ffff00" text-anchor="middle" font-weight="normal">P</text>
</g>
<rect x="253" y="376" width="21" height="48" fill="#989898" shape-rendering="crispEdges"/>
<rect x="254" y="377" width="19" height="46" fill="#6e6e6e" shape-rendering="crispEdges"/>
<g transform="translate(253 376) scale(1 1)">
<g fill="none" stroke="#e4e4e4" stroke-width="1.2"><circle cx="10.5" cy="23" r="8"/><circle cx="10.5" cy="23" r="5.44"/><circle cx="10.5" cy="23" r="2.56"/>
<path d="M13.1 23.0 L18.5 23.0 M12.3 24.8 L16.2 28.7 M10.5 25.6 L10.5 31.0 M8.7 24.8 L4.8 28.7 M7.9 23.0 L2.5 23.0 M8.7 21.2 L4.8 17.3 M10.5 20.4 L10.5 15.0 M12.3 21.2 L16.2 17.3 "/></g>
</g>
<rect x="275" y="400" width="22" height="24" fill="#8c8c94" shape-rendering="crispEdges"/>
<rect x="276" y="401" width="20" height="22" fill="#191970" shape-rendering="crispEdges"/>
<g transform="translate(275 399) scale(1 1)">
<path d="M10 7 h2 v1 h1 v2 h1 v6 h2 v2 h-10 v-2 h2 v-6 h1 v-2 h1z" fill="#ffff00" shape-rendering="crispEdges"/>
<path d="M2 20 l2 -2 l2 2 l2 -2 l2 2 l2 -2 l2 2 l2 -2 l2 2 l2 -2" stroke="#ffff00" stroke-width="1.2" fill="none"/>
</g>
<rect x="298" y="376" width="46" height="48" fill="#989898" shape-rendering="crispEdges"/>
<rect x="299" y="377" width="44" height="46" fill="#6e6e6e" shape-rendering="crispEdges"/>
<g transform="translate(298.5 377) scale(1 1)">
<g transform="translate(0 0)">
<path d="M6 31 H38 L35 37 H9 Z" fill="none" stroke="#e4e4e4" stroke-width="1.4"/>
<path d="M9 31 V24 H13 L15 31" fill="none" stroke="#e4e4e4" stroke-width="1.4"/>
<circle cx="23" cy="22" r="3" fill="none" stroke="#e4e4e4" stroke-width="1.3"/>
<path d="M23 25 V31 M34 15 V31" stroke="#e4e4e4" stroke-width="1.4" fill="none"/>
<path d="M4 42 V38 l2 -2 l2 2 l2 -2 l2 2 l2 -2 l2 2 l2 -2 l2 2 l2 -2 l2 2 l2 -2 l2 2 l2 -2 l2 2 l2 -2 l2 2 l2 -2 l2 2 V42 Z" fill="#e4e4e4"/>
</g>
</g>
<rect x="5" y="426" width="568.5" height="446.5" fill="#000" />
<line x1="5" y1="426.5" x2="573.5" y2="426.5" stroke="#e8e8e8" stroke-width="1" stroke-dasharray="1 1" shape-rendering="crispEdges"/>
<line x1="573" y1="426" x2="573" y2="872.5" stroke="#e8e8e8" stroke-width="1" stroke-dasharray="1 1" shape-rendering="crispEdges"/>
<line x1="0" y1="872" x2="573.5" y2="872" stroke="#e8e8e8" stroke-width="1" stroke-dasharray="1 1" shape-rendering="crispEdges"/>
<rect x="4" y="426" width="1" height="446" fill="#000" />
<text x="15.5" y="447" font-size="25" fill="#ffff00" font-family='"Liberation Sans", sans-serif' xml:space="preserve"><tspan textLength="26.56" lengthAdjust="spacingAndGlyphs">22</tspan><tspan textLength="11.94" lengthAdjust="spacingAndGlyphs">-</tspan><tspan textLength="39.84" lengthAdjust="spacingAndGlyphs">aug</tspan><tspan textLength="11.94" lengthAdjust="spacingAndGlyphs">-</tspan><tspan textLength="152.71" lengthAdjust="spacingAndGlyphs">1997,17:05:00</tspan></text>
<text x="273" y="447" font-size="25" fill="#fff" font-family='"Liberation Sans", sans-serif' textLength="258" lengthAdjust="spacingAndGlyphs"  xml:space="preserve">maxdz plot.  maxdz plot.</text>
<defs><clipPath id="rclip"><rect x="55" y="457" width="432" height="338"/></clipPath></defs>
<g clip-path="url(#rclip)">
<g shape-rendering="crispEdges">
<rect x="232" y="482" width="21" height="14" fill="#007848" />
<rect x="234" y="481" width="18" height="14" fill="#c8c8c8" />
<rect x="239" y="486" width="6" height="6" fill="#d89030" />
<rect x="248" y="494" width="8" height="4" fill="#00e696" />
<rect x="192" y="491" width="12" height="10" fill="#007848" />
<rect x="180" y="491" width="8" height="5" fill="#007848" />
<rect x="184" y="491" width="4" height="3" fill="#c8c8c8" />
<rect x="261" y="491" width="6" height="10" fill="#00e696" />
<rect x="266" y="492" width="6" height="10" fill="#007848" />
<rect x="222" y="472" width="8" height="2" fill="#007848" />
<rect x="297" y="472" width="2" height="2" fill="#007848" />
<rect x="240" y="520" width="11" height="14" fill="#00e696" />
<rect x="244" y="525" width="6" height="8" fill="#007848" />
<rect x="280" y="546" width="6" height="5" fill="#00e696" />
<rect x="226" y="561" width="6" height="6" fill="#00e696" />
<rect x="238" y="569" width="4" height="4" fill="#00e696" />
<rect x="258" y="566" width="6" height="11" fill="#00e696" />
<rect x="259" y="560" width="6" height="5" fill="#c8c8c8" />
<rect x="312" y="530" width="8" height="10" fill="#00e696" />
<rect x="318" y="522" width="5" height="10" fill="#c8c8c8" />
<rect x="138" y="588" width="10" height="8" fill="#00e696" />
<rect x="151" y="582" width="8" height="10" fill="#00e696" />
<rect x="135" y="601" width="10" height="10" fill="#007848" />
<rect x="138" y="609" width="8" height="2" fill="#c8c8c8" />
<rect x="165" y="631" width="12" height="3" fill="#00e696" />
<rect x="175" y="632" width="6" height="14" fill="#007848" />
<rect x="164" y="634" width="13" height="17" fill="#c8c8c8" />
<rect x="151" y="638" width="8" height="10" fill="#00e696" />
<rect x="172" y="651" width="6" height="5" fill="#007848" />
<rect x="179" y="649" width="10" height="10" fill="#c8c8c8" />
<rect x="181" y="651" width="7" height="6" fill="#d89030" />
<rect x="200" y="648" width="15" height="10" fill="#00e696" />
<rect x="208" y="638" width="9" height="6" fill="#c8c8c8" />
<rect x="222" y="620" width="5" height="5" fill="#00e696" />
<rect x="199" y="651" width="8" height="10" fill="#00e696" />
<rect x="336" y="505" width="12" height="25" fill="#007848" />
<rect x="342" y="520" width="15" height="20" fill="#007848" />
<rect x="311" y="531" width="15" height="9" fill="#00e696" />
<rect x="316" y="521" width="14" height="16" fill="#c8c8c8" />
<rect x="339" y="535" width="20" height="10" fill="#00e696" />
<rect x="344" y="530" width="12" height="10" fill="#c8c8c8" />
<rect x="348" y="532" width="6" height="5" fill="#d89030" />
<rect x="370" y="530" width="15" height="20" fill="#007848" />
<rect x="390" y="538" width="12" height="12" fill="#007848" />
<rect x="385" y="544" width="20" height="8" fill="#00e696" />
<rect x="359" y="544" width="25" height="25" fill="#00e696" />
<rect x="375" y="548" width="9" height="20" fill="#007848" />
<rect x="360" y="551" width="15" height="12" fill="#d89030" />
<rect x="369" y="549" width="8" height="16" fill="#c8c8c8" />
<rect x="419" y="582" width="10" height="8" fill="#007848" />
<rect x="394" y="598" width="9" height="9" fill="#00e696" />
<rect x="396" y="586" width="3" height="3" fill="#00e696" />
<rect x="402" y="576" width="2" height="2" fill="#00e696" />
<rect x="345" y="592" width="15" height="10" fill="#00e696" />
<rect x="326" y="570" width="8" height="8" fill="#00e696" />
<rect x="330" y="585" width="12" height="12" fill="#c8c8c8" />
<rect x="330" y="580" width="10" height="5" fill="#d89030" />
<rect x="342" y="595" width="6" height="8" fill="#d89030" />
<rect x="292" y="590" width="25" height="12" fill="#10b0e0" />
<rect x="300" y="580" width="14" height="10" fill="#00e696" />
<rect x="310" y="598" width="10" height="8" fill="#1080f0" />
<rect x="322" y="592" width="8" height="6" fill="#00e696" />
<rect x="341" y="631" width="8" height="8" fill="#d89030" />
<rect x="341" y="636" width="6" height="5" fill="#c8c8c8" />
<rect x="355" y="640" width="5" height="5" fill="#00e696" />
<rect x="334" y="639" width="3" height="4" fill="#1080f0" />
<rect x="171" y="686" width="6" height="12" fill="#007848" />
<rect x="164" y="694" width="12" height="22" fill="#c8c8c8" />
<rect x="164" y="698" width="10" height="16" fill="#d89030" />
<rect x="160" y="702" width="4" height="10" fill="#00e696" />
<rect x="200" y="686" width="3" height="8" fill="#00e696" />
<rect x="209" y="700" width="8" height="5" fill="#00e696" />
<rect x="216" y="671" width="8" height="10" fill="#00e696" />
<rect x="226" y="670" width="10" height="10" fill="#c8c8c8" />
<rect x="228" y="672" width="7" height="6" fill="#d89030" />
<rect x="240" y="715" width="10" height="8" fill="#00e696" />
<rect x="246" y="714" width="6" height="5" fill="#c8c8c8" />
<rect x="259" y="728" width="5" height="5" fill="#00e696" />
<rect x="265" y="715" width="6" height="6" fill="#00e696" />
<rect x="240" y="741" width="8" height="9" fill="#00e696" />
<rect x="221" y="748" width="10" height="9" fill="#007848" />
<rect x="221" y="747" width="8" height="4" fill="#00e696" />
<rect x="239" y="755" width="9" height="6" fill="#00e696" />
<rect x="218" y="736" width="2" height="2" fill="#00e696" />
<rect x="259" y="741" width="5" height="5" fill="#00e696" />
<rect x="250" y="702" width="8" height="6" fill="#c8c8c8" />
<rect x="252" y="699" width="5" height="4" fill="#00e696" />
<rect x="270" y="682" width="8" height="8" fill="#d89030" />
<rect x="299" y="690" width="8" height="6" fill="#10b0e0" />
<rect x="269" y="742" width="16" height="10" fill="#c8c8c8" />
<rect x="269" y="744" width="9" height="8" fill="#d89030" />
<rect x="280" y="750" width="12" height="25" fill="#00e696" />
<rect x="285" y="765" width="8" height="20" fill="#007848" />
<rect x="245" y="783" width="30" height="11" fill="#007848" />
<rect x="275" y="770" width="15" height="15" fill="#007848" />
<rect x="276" y="782" width="20" height="12" fill="#c8c8c8" />
<rect x="275" y="760" width="10" height="12" fill="#00e696" />
<rect x="286" y="716" width="8" height="6" fill="#00e696" />
<rect x="300" y="718" width="6" height="8" fill="#c8c8c8" />
<rect x="306" y="719" width="12" height="6" fill="#007848" />
<rect x="298" y="714" width="25" height="5" fill="#00e696" />
<rect x="302" y="734" width="9" height="5" fill="#00e696" />
<rect x="306" y="739" width="10" height="20" fill="#007848" />
<rect x="298" y="744" width="8" height="8" fill="#c8c8c8" />
<rect x="298" y="750" width="10" height="10" fill="#00e696" />
<rect x="320" y="750" width="9" height="8" fill="#c8c8c8" />
<rect x="334" y="762" width="14" height="14" fill="#007848" />
<rect x="334" y="761" width="6" height="6" fill="#00e696" />
<rect x="345" y="763" width="5" height="5" fill="#00e696" />
<rect x="345" y="736" width="12" height="12" fill="#00e696" />
<rect x="399" y="732" width="4" height="4" fill="#007848" />
<rect x="334" y="680" width="8" height="8" fill="#00e696" />
<rect x="321" y="593" width="4" height="4" fill="#10b0e0" />
<rect x="334" y="582" width="2" height="2" fill="#10b0e0" />
<rect x="287" y="598" width="4" height="4" fill="#10b0e0" />
<rect x="309" y="588" width="3" height="3" fill="#10b0e0" />
<rect x="338" y="580" width="2" height="2" fill="#10b0e0" />
<rect x="317" y="586" width="2" height="2" fill="#10b0e0" />
<rect x="332" y="583" width="2" height="2" fill="#00e696" />
<rect x="296" y="601" width="2" height="2" fill="#10b0e0" />
<rect x="339" y="589" width="3" height="3" fill="#00e696" />
<rect x="281" y="608" width="3" height="3" fill="#10b0e0" />
<rect x="304" y="597" width="4" height="4" fill="#007848" />
<rect x="318" y="586" width="3" height="3" fill="#00e696" />
<rect x="318" y="588" width="2" height="2" fill="#10b0e0" />
<rect x="301" y="603" width="3" height="3" fill="#00e696" />
<rect x="286" y="601" width="4" height="4" fill="#10b0e0" />
<rect x="310" y="595" width="2" height="2" fill="#10b0e0" />
<rect x="331" y="592" width="3" height="3" fill="#1080f0" />
<rect x="302" y="599" width="2" height="2" fill="#1080f0" />
<rect x="329" y="592" width="2" height="2" fill="#00e696" />
<rect x="332" y="581" width="4" height="4" fill="#00e696" />
<rect x="333" y="589" width="4" height="4" fill="#10b0e0" />
<rect x="297" y="593" width="2" height="2" fill="#007848" />
<rect x="292" y="606" width="2" height="2" fill="#007848" />
<rect x="290" y="602" width="3" height="3" fill="#10b0e0" />
<rect x="296" y="602" width="3" height="3" fill="#007848" />
<rect x="301" y="599" width="2" height="2" fill="#00e696" />
<rect x="297" y="602" width="4" height="4" fill="#10b0e0" />
<rect x="322" y="585" width="3" height="3" fill="#00e696" />
<rect x="294" y="597" width="3" height="3" fill="#1080f0" />
<rect x="337" y="585" width="3" height="3" fill="#007848" />
<rect x="324" y="585" width="3" height="3" fill="#10b0e0" />
<rect x="292" y="601" width="2" height="2" fill="#007848" />
<rect x="341" y="579" width="3" height="3" fill="#00e696" />
<rect x="312" y="592" width="2" height="2" fill="#00e696" />
<rect x="324" y="592" width="3" height="3" fill="#1080f0" />
<rect x="320" y="588" width="3" height="3" fill="#00e696" />
<rect x="320" y="583" width="4" height="4" fill="#00e696" />
<rect x="298" y="594" width="4" height="4" fill="#007848" />
<rect x="319" y="586" width="3" height="3" fill="#007848" />
<rect x="335" y="588" width="2" height="2" fill="#007848" />
<rect x="306" y="592" width="2" height="2" fill="#1080f0" />
<rect x="335" y="581" width="3" height="3" fill="#00e696" />
<rect x="324" y="591" width="2" height="2" fill="#1080f0" />
<rect x="328" y="589" width="3" height="3" fill="#00e696" />
<rect x="321" y="592" width="2" height="2" fill="#10b0e0" />
<rect x="303" y="596" width="2" height="2" fill="#10b0e0" />
<rect x="311" y="591" width="2" height="2" fill="#10b0e0" />
<rect x="299" y="594" width="2" height="2" fill="#00e696" />
<rect x="301" y="594" width="3" height="3" fill="#10b0e0" />
<rect x="311" y="594" width="2" height="2" fill="#00e696" />
<rect x="308" y="592" width="2" height="2" fill="#00e696" />
<rect x="322" y="587" width="3" height="3" fill="#00e696" />
<rect x="320" y="588" width="2" height="2" fill="#00e696" />
<rect x="309" y="593" width="3" height="3" fill="#10b0e0" />
<rect x="303" y="595" width="2" height="2" fill="#10b0e0" />
<rect x="279" y="651" width="1.5" height="1.5" fill="#1080f0" />
<rect x="273" y="634" width="1.5" height="1.5" fill="#5020e0" />
<rect x="288" y="643" width="1.5" height="1.5" fill="#5020e0" />
<rect x="279" y="645" width="1.5" height="1.5" fill="#5020e0" />
<rect x="277" y="652" width="1.5" height="1.5" fill="#5020e0" />
<rect x="275" y="648" width="1.5" height="1.5" fill="#5020e0" />
<rect x="265" y="636" width="1.5" height="1.5" fill="#5020e0" />
<rect x="280" y="642" width="1.5" height="1.5" fill="#1080f0" />
<rect x="276" y="650" width="1.5" height="1.5" fill="#5020e0" />
<rect x="284" y="645" width="1.5" height="1.5" fill="#5020e0" />
<rect x="287" y="642" width="2" height="2" fill="#1040e0" />
<rect x="264" y="627" width="2" height="2" fill="#5020e0" />
<rect x="285" y="637" width="1.5" height="1.5" fill="#5020e0" />
<rect x="287" y="640" width="1.5" height="1.5" fill="#5020e0" />
<rect x="283" y="637" width="2" height="2" fill="#5020e0" />
<rect x="275" y="629" width="2" height="2" fill="#1080f0" />
<rect x="291" y="650" width="2" height="2" fill="#5020e0" />
<rect x="286" y="656" width="1.5" height="1.5" fill="#1040e0" />
<rect x="281" y="643" width="1.5" height="1.5" fill="#5020e0" />
<rect x="272" y="634" width="1.5" height="1.5" fill="#5020e0" />
<rect x="278" y="644" width="1.5" height="1.5" fill="#1040e0" />
<rect x="279" y="641" width="1.5" height="1.5" fill="#1040e0" />
<rect x="275" y="631" width="1.5" height="1.5" fill="#1080f0" />
<rect x="276" y="627" width="2" height="2" fill="#1040e0" />
<rect x="277" y="644" width="1.5" height="1.5" fill="#5020e0" />
<rect x="268" y="639" width="1.5" height="1.5" fill="#5020e0" />
<rect x="247" y="629" width="2" height="2" fill="#10b0e0" />
<rect x="251" y="633" width="3" height="3" fill="#1080f0" />
<rect x="246" y="632" width="2" height="2" fill="#10b0e0" />
<rect x="256" y="638" width="2" height="2" fill="#00e696" />
<rect x="254" y="635" width="2" height="2" fill="#00e696" />
<rect x="254" y="631" width="2" height="2" fill="#10b0e0" />
<rect x="258" y="643" width="2" height="2" fill="#10b0e0" />
<rect x="254" y="631" width="2" height="2" fill="#00e696" />
<rect x="208" y="641" width="2" height="2" fill="#1080f0" />
<rect x="209" y="645" width="3" height="3" fill="#10b0e0" />
<rect x="213" y="659" width="2" height="2" fill="#00e696" />
<rect x="222" y="662" width="2" height="2" fill="#10b0e0" />
<rect x="225" y="663" width="2" height="2" fill="#1080f0" />
<rect x="205" y="645" width="4" height="4" fill="#00e696" />
<rect x="217" y="659" width="3" height="3" fill="#00e696" />
<rect x="218" y="660" width="4" height="4" fill="#10b0e0" />
<rect x="215" y="655" width="3" height="3" fill="#10b0e0" />
<rect x="196" y="638" width="2" height="2" fill="#1080f0" />
<rect x="221" y="661" width="2" height="2" fill="#1080f0" />
<rect x="215" y="651" width="3" height="3" fill="#00e696" />
<rect x="206" y="645" width="2" height="2" fill="#10b0e0" />
<rect x="207" y="652" width="2" height="2" fill="#00e696" />
<rect x="206" y="645" width="2" height="2" fill="#10b0e0" />
<rect x="205" y="655" width="3" height="3" fill="#00e696" />
<rect x="225" y="661" width="3" height="3" fill="#00e696" />
<rect x="204" y="640" width="2" height="2" fill="#00e696" />
<rect x="219" y="657" width="2" height="2" fill="#10b0e0" />
<rect x="240" y="680" width="2" height="2" fill="#10b0e0" />
<rect x="219" y="670" width="3" height="3" fill="#00e696" />
<rect x="231" y="671" width="2" height="2" fill="#10b0e0" />
<rect x="231" y="673" width="3" height="3" fill="#10b0e0" />
<rect x="214" y="663" width="4" height="4" fill="#1080f0" />
<rect x="241" y="675" width="3" height="3" fill="#10b0e0" />
<rect x="233" y="675" width="2" height="2" fill="#10b0e0" />
<rect x="220" y="662" width="3" height="3" fill="#10b0e0" />
<rect x="218" y="657" width="2" height="2" fill="#00e696" />
<rect x="234" y="669" width="2" height="2" fill="#10b0e0" />
<rect x="242" y="673" width="2" height="2" fill="#10b0e0" />
<rect x="233" y="671" width="4" height="4" fill="#1080f0" />
<rect x="229" y="666" width="2" height="2" fill="#10b0e0" />
<rect x="236" y="677" width="2" height="2" fill="#10b0e0" />
<rect x="219" y="662" width="3" height="3" fill="#10b0e0" />
<rect x="219" y="658" width="2" height="2" fill="#10b0e0" />
<rect x="241" y="677" width="3" height="3" fill="#10b0e0" />
<rect x="225" y="670" width="3" height="3" fill="#1080f0" />
<rect x="232" y="680" width="3" height="3" fill="#10b0e0" />
<rect x="239" y="681" width="4" height="4" fill="#10b0e0" />
<rect x="230" y="668" width="2" height="2" fill="#10b0e0" />
<rect x="279" y="688" width="3" height="3" fill="#1080f0" />
<rect x="243" y="659" width="3" height="3" fill="#00e696" />
<rect x="278" y="672" width="4" height="4" fill="#10b0e0" />
<rect x="238" y="655" width="3" height="3" fill="#00e696" />
<rect x="301" y="688" width="2" height="2" fill="#1080f0" />
<rect x="266" y="671" width="2" height="2" fill="#10b0e0" />
<rect x="284" y="683" width="2" height="2" fill="#1080f0" />
<rect x="268" y="681" width="3" height="3" fill="#00e696" />
<rect x="281" y="681" width="2" height="2" fill="#00e696" />
<rect x="271" y="670" width="2" height="2" fill="#1080f0" />
<rect x="271" y="665" width="2" height="2" fill="#00e696" />
<rect x="277" y="671" width="4" height="4" fill="#10b0e0" />
<rect x="279" y="673" width="2" height="2" fill="#10b0e0" />
<rect x="254" y="671" width="3" height="3" fill="#10b0e0" />
<rect x="271" y="679" width="2" height="2" fill="#1080f0" />
<rect x="269" y="669" width="2" height="2" fill="#00e696" />
<rect x="258" y="671" width="3" height="3" fill="#10b0e0" />
<rect x="294" y="684" width="3" height="3" fill="#1080f0" />
<rect x="285" y="677" width="2" height="2" fill="#10b0e0" />
<rect x="275" y="670" width="3" height="3" fill="#10b0e0" />
<rect x="253" y="667" width="3" height="3" fill="#1080f0" />
<rect x="275" y="673" width="4" height="4" fill="#1080f0" />
<rect x="283" y="687" width="3" height="3" fill="#1080f0" />
<rect x="252" y="657" width="3" height="3" fill="#10b0e0" />
<rect x="252" y="665" width="3" height="3" fill="#1080f0" />
<rect x="289" y="698" width="2" height="2" fill="#10b0e0" />
<rect x="239" y="672" width="3" height="3" fill="#1080f0" />
<rect x="290" y="686" width="4" height="4" fill="#1080f0" />
<rect x="257" y="676" width="2" height="2" fill="#1080f0" />
<rect x="299" y="687" width="2" height="2" fill="#00e696" />
<rect x="271" y="673" width="2" height="2" fill="#1080f0" />
<rect x="259" y="678" width="4" height="4" fill="#1080f0" />
<rect x="251" y="665" width="3" height="3" fill="#1080f0" />
<rect x="258" y="656" width="3" height="3" fill="#10b0e0" />
<rect x="249" y="670" width="4" height="4" fill="#00e696" />
<rect x="266" y="674" width="2" height="2" fill="#1080f0" />
<rect x="260" y="681" width="3" height="3" fill="#10b0e0" />
<rect x="261" y="670" width="4" height="4" fill="#1080f0" />
<rect x="275" y="674" width="2" height="2" fill="#1080f0" />
<rect x="276" y="682" width="4" height="4" fill="#10b0e0" />
<rect x="278" y="695" width="2" height="2" fill="#1080f0" />
<rect x="288" y="700" width="2" height="2" fill="#10b0e0" />
<rect x="284" y="695" width="3" height="3" fill="#1080f0" />
<rect x="292" y="697" width="3" height="3" fill="#10b0e0" />
<rect x="293" y="702" width="2" height="2" fill="#00e696" />
<rect x="262" y="688" width="3" height="3" fill="#10b0e0" />
<rect x="281" y="697" width="2" height="2" fill="#10b0e0" />
<rect x="278" y="693" width="2" height="2" fill="#1080f0" />
<rect x="295" y="695" width="3" height="3" fill="#00e696" />
<rect x="294" y="702" width="3" height="3" fill="#10b0e0" />
<rect x="266" y="690" width="2" height="2" fill="#00e696" />
<rect x="274" y="694" width="2" height="2" fill="#1080f0" />
<rect x="301" y="632" width="2" height="2" fill="#00e696" />
<rect x="300" y="623" width="2" height="2" fill="#00e696" />
<rect x="300" y="632" width="2" height="2" fill="#00e696" />
<rect x="309" y="651" width="2" height="2" fill="#10b0e0" />
<rect x="303" y="623" width="2" height="2" fill="#10b0e0" />
<rect x="303" y="631" width="4" height="4" fill="#10b0e0" />
<rect x="298" y="630" width="3" height="3" fill="#10b0e0" />
<rect x="302" y="637" width="3" height="3" fill="#10b0e0" />
<rect x="300" y="628" width="3" height="3" fill="#10b0e0" />
<rect x="302" y="633" width="3" height="3" fill="#00e696" />
<rect x="303" y="621" width="3" height="3" fill="#00e696" />
<rect x="301" y="637" width="2" height="2" fill="#1080f0" />
<rect x="302" y="629" width="3" height="3" fill="#1080f0" />
<rect x="306" y="629" width="2" height="2" fill="#00e696" />
<rect x="303" y="622" width="3" height="3" fill="#00e696" />
<rect x="298" y="634" width="3" height="3" fill="#00e696" />
<rect x="333" y="610" width="4" height="4" fill="#10b0e0" />
<rect x="336" y="604" width="2" height="2" fill="#00e696" />
<rect x="335" y="609" width="4" height="4" fill="#10b0e0" />
<rect x="334" y="609" width="3" height="3" fill="#00e696" />
<rect x="341" y="618" width="2" height="2" fill="#10b0e0" />
<rect x="336" y="611" width="2" height="2" fill="#10b0e0" />
<rect x="263" y="566" width="2" height="2" fill="#10b0e0" />
<rect x="260" y="563" width="3" height="3" fill="#00e696" />
<rect x="263" y="578" width="3" height="3" fill="#00e696" />
<rect x="262" y="568" width="2" height="2" fill="#10b0e0" />
<rect x="261" y="572" width="4" height="4" fill="#10b0e0" />
<rect x="266" y="577" width="2" height="2" fill="#007848" />
<rect x="263" y="569" width="3" height="3" fill="#00e696" />
<rect x="265" y="579" width="3" height="3" fill="#00e696" />
<rect x="229" y="614" width="4" height="4" fill="#1080f0" />
<rect x="231" y="619" width="2" height="2" fill="#00e696" />
<rect x="238" y="618" width="3" height="3" fill="#00e696" />
<rect x="238" y="617" width="2" height="2" fill="#00e696" />
<rect x="214" y="680" width="2" height="2" fill="#1080f0" />
<rect x="251" y="559" width="2" height="2" fill="#10b0e0" />
<rect x="353" y="583" width="2" height="2" fill="#00e696" />
<rect x="296" y="656" width="2" height="2" fill="#00e696" />
<rect x="249" y="662" width="2" height="2" fill="#10b0e0" />
<rect x="362" y="655" width="2" height="2" fill="#10b0e0" />
<rect x="237" y="561" width="2" height="2" fill="#1080f0" />
<rect x="241" y="610" width="2" height="2" fill="#00e696" />
<rect x="212" y="618" width="2" height="2" fill="#00e696" />
<rect x="292" y="730" width="2" height="2" fill="#1080f0" />
<rect x="250" y="550" width="2" height="2" fill="#00e696" />
<rect x="303" y="650" width="2" height="2" fill="#10b0e0" />
<rect x="250" y="696" width="2" height="2" fill="#00e696" />
<rect x="267" y="596" width="2" height="2" fill="#00e696" />
<rect x="252" y="585" width="2" height="2" fill="#10b0e0" />
<rect x="275" y="581" width="2" height="2" fill="#10b0e0" />
<rect x="244" y="722" width="2" height="2" fill="#10b0e0" />
<rect x="176" y="621" width="2" height="2" fill="#10b0e0" />
<rect x="215" y="684" width="2" height="2" fill="#10b0e0" />
<rect x="244" y="700" width="2" height="2" fill="#10b0e0" />
<rect x="322" y="660" width="2" height="2" fill="#1080f0" />
<rect x="233" y="582" width="2" height="2" fill="#00e696" />
<rect x="248" y="596" width="2" height="2" fill="#1080f0" />
<rect x="310" y="609" width="2" height="2" fill="#00e696" />
</g>
<g fill="none" stroke="#fff" stroke-width="1.1"><circle cx="273.5" cy="630.5" r="27.3"/><circle cx="273.5" cy="630.5" r="54.6"/><circle cx="273.5" cy="630.5" r="81.9"/><circle cx="273.5" cy="630.5" r="109.2"/><circle cx="273.5" cy="630.5" r="136.5"/><circle cx="273.5" cy="630.5" r="163.8"/><circle cx="273.5" cy="630.5" r="191.1"/><circle cx="273.5" cy="630.5" r="218.4"/>
<path d="M55 630.5 H246.2 M300.8 630.5 H487 M273.5 457 V603.2 M273.5 657.8 V795 M119.1 476.1 L254.2 611.2 M292.8 649.8 L427.9 784.9 M119.1 784.9 L254.2 649.8 M292.8 611.2 L427.9 476.1"/></g>
<path d="M319 595 L340 584" stroke="#fff" stroke-width="2"/>
<g fill="none" stroke="#ff9a1e" stroke-width="1"><circle cx="242" cy="464.5" r="7.3"/><circle cx="271.5" cy="616.5" r="7.3"/></g>
<text x="242" y="479" font-size="5" fill="#ff9a1e" font-family='"Liberation Sans", sans-serif' textLength="22" lengthAdjust="spacingAndGlyphs" text-anchor="middle"  xml:space="preserve">vhe-met</text>
<text x="271" y="631" font-size="5" fill="#ff9a1e" font-family='"Liberation Sans", sans-serif' textLength="24" lengthAdjust="spacingAndGlyphs" text-anchor="middle"  xml:space="preserve">bc-125-5</text>
<path d="M266 463.5 h11 M271.5 458 v11" stroke="#ffec8b" stroke-width="1" fill="none"/>
</g>
<text x="41" y="463" font-size="5.5" fill="#ffec8b" font-family='"Liberation Sans", sans-serif'  xml:space="preserve">10</text>
<text x="264" y="808" font-size="5.5" fill="#ffec8b" font-family='"Liberation Sans", sans-serif'  xml:space="preserve">-125</text>
<rect x="487" y="457.5" width="86" height="1" fill="#a8a8a8" shape-rendering="crispEdges"/>
<text x="490" y="470" font-size="17" fill="#fff" font-family='"Liberation Sans", sans-serif' textLength="52" lengthAdjust="spacingAndGlyphs"  xml:space="preserve">maxdz</text>
<rect x="490" y="485" width="10" height="8" fill="#ff8080" shape-rendering="crispEdges"/>
<rect x="490" y="493" width="10" height="8" fill="#ff9098" shape-rendering="crispEdges"/>
<rect x="490" y="501" width="10" height="8" fill="#ffaf64" shape-rendering="crispEdges"/>
<rect x="490" y="509" width="10" height="8" fill="#ffd8b0" shape-rendering="crispEdges"/>
<rect x="490" y="517" width="10" height="8" fill="#ffd700" shape-rendering="crispEdges"/>
<rect x="490" y="525" width="10" height="8" fill="#f0b41e" shape-rendering="crispEdges"/>
<rect x="490" y="533" width="10" height="8" fill="#dc9632" shape-rendering="crispEdges"/>
<rect x="490" y="541" width="10" height="8" fill="#c8c8c8" shape-rendering="crispEdges"/>
<rect x="490" y="549" width="10" height="8" fill="#007848" shape-rendering="crispEdges"/>
<rect x="490" y="557" width="10" height="8" fill="#00e696" shape-rendering="crispEdges"/>
<rect x="490" y="565" width="10" height="8" fill="#14b4dc" shape-rendering="crispEdges"/>
<rect x="490" y="573" width="10" height="8" fill="#1482f0" shape-rendering="crispEdges"/>
<rect x="490" y="581" width="10" height="8" fill="#1446e6" shape-rendering="crispEdges"/>
<rect x="490" y="589" width="10" height="8" fill="#4620e6" shape-rendering="crispEdges"/>
<rect x="490" y="597" width="10" height="8" fill="#7800ff" shape-rendering="crispEdges"/>
<rect x="490" y="605" width="10" height="8" fill="#9600ff" shape-rendering="crispEdges"/>
<text x="505.5" y="492.5" font-size="17" fill="#fff" font-family='"Liberation Sans", sans-serif' textLength="33.5" lengthAdjust="spacingAndGlyphs"  xml:space="preserve">65.0</text>
<text x="505.5" y="516.5" font-size="17" fill="#fff" font-family='"Liberation Sans", sans-serif' textLength="33.5" lengthAdjust="spacingAndGlyphs"  xml:space="preserve">50.0</text>
<text x="505.5" y="540.5" font-size="17" fill="#fff" font-family='"Liberation Sans", sans-serif' textLength="33.5" lengthAdjust="spacingAndGlyphs"  xml:space="preserve">35.0</text>
<text x="505.5" y="564.5" font-size="17" fill="#fff" font-family='"Liberation Sans", sans-serif' textLength="33.5" lengthAdjust="spacingAndGlyphs"  xml:space="preserve">20.0</text>
<text x="505.5" y="588.5" font-size="17" fill="#fff" font-family='"Liberation Sans", sans-serif' textLength="23.5" lengthAdjust="spacingAndGlyphs"  xml:space="preserve">5.0</text>
<text x="505.5" y="612.5" font-size="17" fill="#fff" font-family='"Liberation Sans", sans-serif' xml:space="preserve"><tspan textLength="10.50" lengthAdjust="spacingAndGlyphs">-</tspan><tspan textLength="33.09" lengthAdjust="spacingAndGlyphs">10.0</tspan></text>
<rect x="487" y="639" width="86" height="1" fill="#a8a8a8" shape-rendering="crispEdges"/>
<text x="490" y="651.5" font-size="17" fill="#fff" font-family='"Liberation Sans", sans-serif' textLength="52" lengthAdjust="spacingAndGlyphs"  xml:space="preserve">maxdz</text>
<rect x="490" y="666" width="10" height="8" fill="#ff8080" shape-rendering="crispEdges"/>
<rect x="490" y="674" width="10" height="8" fill="#ff9098" shape-rendering="crispEdges"/>
<rect x="490" y="682" width="10" height="8" fill="#ffaf64" shape-rendering="crispEdges"/>
<rect x="490" y="690" width="10" height="8" fill="#ffd8b0" shape-rendering="crispEdges"/>
<rect x="490" y="698" width="10" height="8" fill="#ffd700" shape-rendering="crispEdges"/>
<rect x="490" y="706" width="10" height="8" fill="#f0b41e" shape-rendering="crispEdges"/>
<rect x="490" y="714" width="10" height="8" fill="#dc9632" shape-rendering="crispEdges"/>
<rect x="490" y="722" width="10" height="8" fill="#c8c8c8" shape-rendering="crispEdges"/>
<rect x="490" y="730" width="10" height="8" fill="#007848" shape-rendering="crispEdges"/>
<rect x="490" y="738" width="10" height="8" fill="#00e696" shape-rendering="crispEdges"/>
<rect x="490" y="746" width="10" height="8" fill="#14b4dc" shape-rendering="crispEdges"/>
<rect x="490" y="754" width="10" height="8" fill="#1482f0" shape-rendering="crispEdges"/>
<rect x="490" y="762" width="10" height="8" fill="#1446e6" shape-rendering="crispEdges"/>
<rect x="490" y="770" width="10" height="8" fill="#4620e6" shape-rendering="crispEdges"/>
<rect x="490" y="778" width="10" height="8" fill="#7800ff" shape-rendering="crispEdges"/>
<rect x="490" y="786" width="10" height="8" fill="#9600ff" shape-rendering="crispEdges"/>
<text x="505.5" y="673" font-size="17" fill="#fff" font-family='"Liberation Sans", sans-serif' textLength="33.5" lengthAdjust="spacingAndGlyphs"  xml:space="preserve">65.0</text>
<text x="505.5" y="697" font-size="17" fill="#fff" font-family='"Liberation Sans", sans-serif' textLength="33.5" lengthAdjust="spacingAndGlyphs"  xml:space="preserve">50.0</text>
<text x="505.5" y="721" font-size="17" fill="#fff" font-family='"Liberation Sans", sans-serif' textLength="33.5" lengthAdjust="spacingAndGlyphs"  xml:space="preserve">35.0</text>
<text x="505.5" y="745" font-size="17" fill="#fff" font-family='"Liberation Sans", sans-serif' textLength="33.5" lengthAdjust="spacingAndGlyphs"  xml:space="preserve">20.0</text>
<text x="505.5" y="769" font-size="17" fill="#fff" font-family='"Liberation Sans", sans-serif' textLength="23.5" lengthAdjust="spacingAndGlyphs"  xml:space="preserve">5.0</text>
<text x="505.5" y="793" font-size="17" fill="#fff" font-family='"Liberation Sans", sans-serif' xml:space="preserve"><tspan textLength="10.50" lengthAdjust="spacingAndGlyphs">-</tspan><tspan textLength="33.09" lengthAdjust="spacingAndGlyphs">10.0</tspan></text>
<rect x="488" y="819.5" width="85" height="1" fill="#a8a8a8" shape-rendering="crispEdges"/>
<text x="381" y="860.5" font-size="25" fill="#fff" font-family='"Liberation Sans", sans-serif' textLength="181.5" lengthAdjust="spacingAndGlyphs"  xml:space="preserve">Alt: 0.50 km MSL</text>
<rect x="10" y="821" width="46" height="48" fill="#8c8c94" shape-rendering="crispEdges"/>
<rect x="11" y="822" width="44" height="46" fill="#191970" shape-rendering="crispEdges"/>
<g transform="translate(10.5 821.5) scale(1 1)">
<path d="M6 11 C11 6 17 6 23 9 S32 12 38 8 L7 39 C13 33 19 34 25 37 S34 40 39 34" fill="none" stroke="#ffff00" stroke-width="1.5" stroke-linejoin="round" stroke-linecap="round"/>
<path d="M9 9.5 C14 6.5 18 7 23 9 S31 11.5 36 9.5 C31 13.5 27 12.5 22 11 S14 8.5 9 9.5Z M10 38 C14 34 19 34.5 25 37 S33 39.5 37 36.5 C33 41.5 28 40.5 24 39 S14 36 10 38Z" fill="#ffff00"/>
</g>
<rect x="57" y="821" width="46" height="48" fill="#989898" shape-rendering="crispEdges"/>
<rect x="58" y="822" width="44" height="46" fill="#6e6e6e" shape-rendering="crispEdges"/>
<g transform="translate(57 821) scale(1 1)">
<text x="3" y="15" font-size="15" font-weight="bold" font-family='"Liberation Sans", sans-serif' fill="#e4e4e4" textLength="30" lengthAdjust="spacingAndGlyphs">GOES</text>
<text x="25.5" y="43.2" font-size="11" font-family='"Liberation Sans", sans-serif' fill="#e4e4e4" textLength="14" lengthAdjust="spacingAndGlyphs">.IR</text>
<defs><clipPath id="gclipdg"><rect x="3" y="16" width="30" height="28"/></clipPath></defs>
<g clip-path="url(#gclipdg)"><circle cx="11" cy="31" r="13.5" fill="url(#dg)"/>
<path d="M3 36 h8 l3 3 v5 h-11z M14 23 h5 l2 4 l-1 4 h-5 l-2 -4z M3 17 h3 l2 3 l-1 5 h-4z" fill="#e4e4e4"/></g>
<path d="M21 23.5 L38 21.5 M25 31.5 L39 23.5" stroke="#e4e4e4" stroke-width="1.1" stroke-dasharray="1 1.7" fill="none"/>
<path d="M40.5 18 l3.2 3.2 l-3.2 3.2 l-3.2 -3.2z" fill="#e4e4e4"/>
<rect x="18" y="18" width="1" height="1" fill="#e4e4e4"/>
<rect x="31" y="17" width="1" height="1" fill="#e4e4e4"/>
<rect x="37" y="30" width="1" height="1" fill="#e4e4e4"/>
<rect x="34" y="33" width="1" height="1" fill="#e4e4e4"/>
<rect x="29" y="32" width="1" height="1" fill="#e4e4e4"/>
</g>
<rect x="104" y="821" width="46" height="48" fill="#8c8c94" shape-rendering="crispEdges"/>
<rect x="105" y="822" width="44" height="46" fill="#191970" shape-rendering="crispEdges"/>
<g transform="translate(94.5 821.5) scale(1 1)">
<path d="M15 8 C16 19 24 29 37 31.5" fill="none" stroke="#ffff00" stroke-width="2" stroke-linecap="round"/>
<path d="M22 20.5 L26.5 21 L24.5 26 Z" fill="none" stroke="#ffff00" stroke-width="1"/>
<path d="M22.5 24 L25 24 L25.5 34 L27 34 L27 39.5 L18.5 39.5 L18.5 34 L21.5 34 Z" fill="#ffff00"/>
</g>
<g transform="translate(104 821) scale(1 1)">
<text x="35.5" y="16" font-size="13" font-family='"Liberation Sans", sans-serif' fill="#ffff00" text-anchor="middle" font-weight="normal">S</text>
<text x="35.5" y="28.2" font-size="13" font-family='"Liberation Sans", sans-serif' fill="#ffff00" text-anchor="middle" font-weight="normal">U</text>
<text x="35.5" y="40.4" font-size="13" font-family='"Liberation Sans", sans-serif' fill="#ffff00" text-anchor="middle" font-weight="normal">R</text>
</g>
<rect x="151" y="821" width="46" height="48" fill="#8c8c94" shape-rendering="crispEdges"/>
<rect x="152" y="822" width="44" height="46" fill="#191970" shape-rendering="crispEdges"/>
<g transform="translate(151 821) scale(1 1)">
<path d="M5.5 6.5 h35.0 M5.5 6.5 v35.0 M5.5 15.25 h35.0 M14.25 6.5 v35.0 M5.5 24.0 h35.0 M23.0 6.5 v35.0 M5.5 32.75 h35.0 M31.75 6.5 v35.0 M5.5 41.5 h35.0 M40.5 6.5 v35.0 " stroke="#ffff00" stroke-width="1.4" fill="none" shape-rendering="crispEdges"/>
</g>
<g transform="translate(148 821.5) scale(1 1)">
<path d="M15 8 C16 19 24 29 37 31.5" fill="none" stroke="#ffff00" stroke-width="2" stroke-linecap="round"/>
<path d="M22 20.5 L26.5 21 L24.5 26 Z" fill="none" stroke="#ffff00" stroke-width="1"/>
<path d="M22.5 24 L25 24 L25.5 34 L27 34 L27 39.5 L18.5 39.5 L18.5 34 L21.5 34 Z" fill="#ffff00"/>
</g>
<rect x="198" y="821" width="14" height="48" fill="#8c8c94" shape-rendering="crispEdges"/>
<rect x="199" y="822" width="12" height="46" fill="#191970" shape-rendering="crispEdges"/>
<g transform="translate(198 821) scale(1 1)">
<text x="7" y="10.5" font-size="6.8" font-family='"Liberation Sans", sans-serif' fill="#ffff00" text-anchor="middle" font-weight="bold">B</text>
<text x="7" y="17.2" font-size="6.8" font-family='"Liberation Sans", sans-serif' fill="#ffff00" text-anchor="middle" font-weight="bold">O</text>
<text x="7" y="23.9" font-size="6.8" font-family='"Liberation Sans", sans-serif' fill="#ffff00" text-anchor="middle" font-weight="bold">U</text>
<text x="7" y="30.6" font-size="6.8" font-family='"Liberation Sans", sans-serif' fill="#ffff00" text-anchor="middle" font-weight="bold">N</text>
<text x="7" y="37.3" font-size="6.8" font-family='"Liberation Sans", sans-serif' fill="#ffff00" text-anchor="middle" font-weight="bold">D</text>
<text x="7" y="44" font-size="6.8" font-family='"Liberation Sans", sans-serif' fill="#ffff00" text-anchor="middle" font-weight="bold">S</text>
</g>
<rect x="213" y="845" width="22" height="24" fill="#8c8c94" shape-rendering="crispEdges"/>
<rect x="214" y="846" width="20" height="22" fill="#191970" shape-rendering="crispEdges"/>
<g transform="translate(213 845) scale(1 1)">
<path d="M3.5 4.5 h14.100000000000001 M3.5 4.5 v14.100000000000001 M3.5 9.2 h14.100000000000001 M8.2 4.5 v14.100000000000001 M3.5 13.9 h14.100000000000001 M12.9 4.5 v14.100000000000001 M3.5 18.6 h14.100000000000001 M17.6 4.5 v14.100000000000001 " stroke="#ffff00" stroke-width="1.1" fill="none" shape-rendering="crispEdges"/>
</g>
<rect x="236" y="821" width="21" height="48" fill="#8c8c94" shape-rendering="crispEdges"/>
<rect x="237" y="822" width="19" height="46" fill="#191970" shape-rendering="crispEdges"/>
<g transform="translate(236 821) scale(1 1)">
<path d="M3 5 l4 -1 l2 3 l-2 1 l-1 4 l-2 -3z M10 4 l3 1 l4 -2 l-1 3 l-2 0 l1 4 l2 3 l-3 -1 l-2 -3 l-3 -2z" fill="#ffff00"/>
<text x="10.5" y="25" font-size="10.5" font-family='"Liberation Sans", sans-serif' fill="#ffff00" text-anchor="middle" font-weight="normal">M</text>
<text x="10.5" y="33.6" font-size="10.5" font-family='"Liberation Sans", sans-serif' fill="#ffff00" text-anchor="middle" font-weight="normal">A</text>
<text x="10.5" y="42.2" font-size="10.5" font-family='"Liberation Sans", sans-serif' fill="#ffff00" text-anchor="middle" font-weight="normal">P</text>
</g>
<rect x="258" y="821" width="21" height="48" fill="#8c8c94" shape-rendering="crispEdges"/>
<rect x="259" y="822" width="19" height="46" fill="#191970" shape-rendering="crispEdges"/>
<g transform="translate(258 821) scale(1 1)">
<g fill="none" stroke="#ffff00" stroke-width="1.2"><circle cx="10.5" cy="23" r="8"/><circle cx="10.5" cy="23" r="5.44"/><circle cx="10.5" cy="23" r="2.56"/>
<path d="M13.1 23.0 L18.5 23.0 M12.3 24.8 L16.2 28.7 M10.5 25.6 L10.5 31.0 M8.7 24.8 L4.8 28.7 M7.9 23.0 L2.5 23.0 M8.7 21.2 L4.8 17.3 M10.5 20.4 L10.5 15.0 M12.3 21.2 L16.2 17.3 "/></g>
</g>
<rect x="280" y="845" width="22" height="24" fill="#8c8c94" shape-rendering="crispEdges"/>
<rect x="281" y="846" width="20" height="22" fill="#191970" shape-rendering="crispEdges"/>
<circle cx="290.5" cy="857" r="6.5" fill="none" stroke="#ffff00" stroke-width="1.1"/>
<rect x="303" y="821" width="46" height="48" fill="#989898" shape-rendering="crispEdges"/>
<rect x="304" y="822" width="44" height="46" fill="#6e6e6e" shape-rendering="crispEdges"/>
<g transform="translate(303.5 822) scale(1 1)">
<g transform="translate(0 0)">
<path d="M6 31 H38 L35 37 H9 Z" fill="none" stroke="#e4e4e4" stroke-width="1.4"/>
<path d="M9 31 V24 H13 L15 31" fill="none" stroke="#e4e4e4" stroke-width="1.4"/>
<circle cx="23" cy="22" r="3" fill="none" stroke="#e4e4e4" stroke-width="1.3"/>
<path d="M23 25 V31 M34 15 V31" stroke="#e4e4e4" stroke-width="1.4" fill="none"/>
<path d="M4 42 V38 l2 -2 l2 2 l2 -2 l2 2 l2 -2 l2 2 l2 -2 l2 2 l2 -2 l2 2 l2 -2 l2 2 l2 -2 l2 2 l2 -2 l2 2 l2 -2 l2 2 V42 Z" fill="#e4e4e4"/>
</g>
</g>
<rect x="572" y="2" width="561" height="384" fill="#000" />
<line x1="572.5" y1="2" x2="572.5" y2="386" stroke="#e8e8e8" stroke-width="1" stroke-dasharray="1 1" shape-rendering="crispEdges"/>
<line x1="1132.5" y1="2" x2="1132.5" y2="386" stroke="#e8e8e8" stroke-width="1" stroke-dasharray="1 1" shape-rendering="crispEdges"/>
<line x1="573" y1="2.5" x2="1133" y2="2.5" stroke="#e8e8e8" stroke-width="1" stroke-dasharray="1 1" shape-rendering="crispEdges"/>
<polygon points="622.5,299 622.5,248 650,248 652.5,243.5 652.5,225.5 718.75,225.5 721.25,220 721.25,207 747,207 747,225.5 803,225.5 803,235.5 855,235.5 859.5,229 859.5,225.5 867,225.5 867,207 983,207 983,196.25 992,196.25 992,207 1026.25,207 1026.25,225.5 1048.5,225.5 1048.5,299" fill="#007848" />
<polygon points="622.5,248 650,248 652,258 653,262 653,299 622.5,299" fill="#00e696" />
<polygon points="652.5,225.5 698.75,225.5 685,234.5 670,238 660,240.5 652.5,246.5" fill="#00e696" />
<polygon points="721.25,207 747,207 747,217.5 735,217.5 721.25,218.75" fill="#00e696" />
<polygon points="721.25,207 735,207 735,208.5 721.25,208.5" fill="#1e90ff" />
<polygon points="793.75,225.5 803,225.5 803,229" fill="#00e696" />
<polygon points="818.75,235.5 855,235.5 859.5,229 859.5,225.5 867,225.5 867,207 887.5,207 885,220 865,230 855,236 840,241 835,241.5 825,239" fill="#00e696" />
<polygon points="983,196.25 992,196.25 992,202 983,202" fill="#00e696" />
<polygon points="1012.5,207 1026.25,207 1026.25,213.75" fill="#00e696" />
<polygon points="622.5,248 629,248 622.5,255.5" fill="#1e90ff" />
<polygon points="673,299 673.75,280 675,262.5 677.5,251.25 682.5,246.25 710,244.5 722.5,241.25 737.5,237 750,235 760,236.25 772.5,242.5 785,251.25 797.5,262.5 806.25,272.5 810,287.5 810.75,299" fill="#c8c8c8" />
<polygon points="869.5,299 871.25,280 873.75,255 875,247.5 885,238.75 900,230 922.5,224.5 960,222.5 990,222 1015,224.5 1037.5,227.5 1048.5,230 1048.5,299" fill="#c8c8c8" />
<polygon points="903.75,299 907.5,285 912.5,265 917.5,251.25 922.5,245.5 947.5,243 960,241.75 987.5,241.75 1002.5,246.25 1017.5,257.5 1030,262.5 1038.75,267.5 1041.25,275 1043.75,290 1045.5,299" fill="#d89030" />
<path d="M622.5 29.5 H1048.5 V311.5 H622.5 Z M622.5 283.5 h12 M1048.5 283.5 h-12 M622.5 255.5 h12 M1048.5 255.5 h-12 M622.5 226.5 h12 M1048.5 226.5 h-12 M622.5 198.5 h12 M1048.5 198.5 h-12 M622.5 170.5 h12 M1048.5 170.5 h-12 M622.5 142.5 h12 M1048.5 142.5 h-12 M622.5 114.5 h12 M1048.5 114.5 h-12 M622.5 85.5 h12 M1048.5 85.5 h-12 M622.5 57.5 h12 M1048.5 57.5 h-12 M675.5 29.5 v8 M675.5 311.5 v-8 M729.5 29.5 v8 M729.5 311.5 v-8 M782.5 29.5 v8 M782.5 311.5 v-8 M835.5 29.5 v8 M835.5 311.5 v-8 M888.5 29.5 v8 M888.5 311.5 v-8 M942.5 29.5 v8 M942.5 311.5 v-8 M995.5 29.5 v8 M995.5 311.5 v-8 " fill="none" stroke="#fff" stroke-width="1" shape-rendering="crispEdges"/>
<text x="618.5" y="311" font-size="10" fill="#fff" font-family='"Liberation Sans", sans-serif' text-anchor="end"  xml:space="preserve">0</text>
<text x="618.5" y="254.6" font-size="10" fill="#fff" font-family='"Liberation Sans", sans-serif' text-anchor="end"  xml:space="preserve">4</text>
<text x="618.5" y="198.2" font-size="10" fill="#fff" font-family='"Liberation Sans", sans-serif' text-anchor="end"  xml:space="preserve">8</text>
<text x="618.5" y="141.8" font-size="10" fill="#fff" font-family='"Liberation Sans", sans-serif' text-anchor="end"  xml:space="preserve">12</text>
<text x="618.5" y="85.4" font-size="10" fill="#fff" font-family='"Liberation Sans", sans-serif' text-anchor="end"  xml:space="preserve">16</text>
<text x="618.5" y="29" font-size="10" fill="#fff" font-family='"Liberation Sans", sans-serif' text-anchor="end"  xml:space="preserve">20</text>
<text x="622.5" y="323" font-size="10.5" fill="#fff" font-family='"Liberation Sans", sans-serif' text-anchor="middle"  xml:space="preserve">0.0</text>
<text x="729" y="323" font-size="10.5" fill="#fff" font-family='"Liberation Sans", sans-serif' text-anchor="middle"  xml:space="preserve">7.2</text>
<text x="835.5" y="323" font-size="10.5" fill="#fff" font-family='"Liberation Sans", sans-serif' text-anchor="middle"  xml:space="preserve">14.3</text>
<text x="942" y="323" font-size="10.5" fill="#fff" font-family='"Liberation Sans", sans-serif' text-anchor="middle"  xml:space="preserve">21.5</text>
<text x="1049" y="323" font-size="10.5" fill="#fff" font-family='"Liberation Sans", sans-serif' text-anchor="end"  xml:space="preserve">28</text>
<text x="802.5" y="331" font-size="10.5" fill="#fff" font-family='"Liberation Sans", sans-serif' textLength="67" lengthAdjust="spacingAndGlyphs"  xml:space="preserve">Distance in km</text>
<text transform="translate(603 217.5) rotate(-90)" font-size="13" font-family='"Liberation Serif", serif' fill="#fff" textLength="95" lengthAdjust="spacingAndGlyphs">km above MSL</text>
<text x="582.5" y="20.5" font-size="18.5" fill="#ffff00" font-family='"Liberation Sans", sans-serif' xml:space="preserve"><tspan textLength="20.28" lengthAdjust="spacingAndGlyphs">22</tspan><tspan textLength="9.11" lengthAdjust="spacingAndGlyphs">-</tspan><tspan textLength="30.42" lengthAdjust="spacingAndGlyphs">aug</tspan><tspan textLength="9.11" lengthAdjust="spacingAndGlyphs">-</tspan><tspan textLength="116.58" lengthAdjust="spacingAndGlyphs">1997,17:05:00</tspan></text>
<text x="779.5" y="20.5" font-size="18.5" fill="#fff" font-family='"Liberation Sans", sans-serif' xml:space="preserve"><tspan textLength="104.17" lengthAdjust="spacingAndGlyphs">Planar cross</tspan><tspan textLength="9.37" lengthAdjust="spacingAndGlyphs">-</tspan><tspan textLength="197.96" lengthAdjust="spacingAndGlyphs">section plot.  Contour of</tspan></text>
<text x="582.5" y="47.5" font-size="18.5" fill="#fff" font-family='"Liberation Sans", sans-serif' textLength="172.5" lengthAdjust="spacingAndGlyphs"  xml:space="preserve">maxdz using: rhb_3d.</text>
<rect x="1048.5" y="29" width="84.5" height="1" fill="#a8a8a8" shape-rendering="crispEdges"/>
<text x="1050.5" y="43.5" font-size="12.5" fill="#fff" font-family='"Liberation Sans", sans-serif' textLength="34" lengthAdjust="spacingAndGlyphs"  xml:space="preserve">maxdz</text>
<rect x="1048.5" y="335" width="84.5" height="1" fill="#a8a8a8" shape-rendering="crispEdges"/>
<rect x="577" y="336" width="46" height="48" fill="#8c8c94" shape-rendering="crispEdges"/>
<rect x="578" y="337" width="44" height="46" fill="#191970" shape-rendering="crispEdges"/>
<g transform="translate(577.5 336.5) scale(1 1)">
<path d="M6 11 C11 6 17 6 23 9 S32 12 38 8 L7 39 C13 33 19 34 25 37 S34 40 39 34" fill="none" stroke="#ffff00" stroke-width="1.5" stroke-linejoin="round" stroke-linecap="round"/>
<path d="M9 9.5 C14 6.5 18 7 23 9 S31 11.5 36 9.5 C31 13.5 27 12.5 22 11 S14 8.5 9 9.5Z M10 38 C14 34 19 34.5 25 37 S33 39.5 37 36.5 C33 41.5 28 40.5 24 39 S14 36 10 38Z" fill="#ffff00"/>
</g>
<rect x="624" y="336" width="46" height="48" fill="#8c8c94" shape-rendering="crispEdges"/>
<rect x="625" y="337" width="44" height="46" fill="#191970" shape-rendering="crispEdges"/>
<g transform="translate(624 336) scale(1 1)">
<text x="22.7" y="8.6" font-size="7.2" font-weight="bold" font-family='"Liberation Sans", sans-serif' fill="#ffff00" text-anchor="middle" textLength="24" lengthAdjust="spacingAndGlyphs">CROSS</text>
<text x="22.7" y="43.7" font-size="7.2" font-weight="bold" font-family='"Liberation Sans", sans-serif' fill="#ffff00" text-anchor="middle" textLength="30.5" lengthAdjust="spacingAndGlyphs">SECTION</text>
<rect x="13" y="13" width="22" height="21" fill="url(#dy)" shape-rendering="crispEdges"/>
<path d="M4.5 16.5 H25.5 V37.5 H4.5 Z M19.5 10.5 H40.5 V31.5 H19.5 Z M4.5 16.5 L19.5 10.5 M25.5 16.5 L40.5 10.5 M25.5 37.5 L40.5 31.5 M4.5 37.5 L19.5 31.5" fill="none" stroke="#ffff00" stroke-width="1.2"/>
</g>
<rect x="671" y="336" width="46" height="48" fill="#989898" shape-rendering="crispEdges"/>
<rect x="672" y="337" width="44" height="46" fill="#6e6e6e" shape-rendering="crispEdges"/>
<g transform="translate(671 336) scale(1 1)">
<text x="22.7" y="8.6" font-size="7.2" font-weight="bold" font-family='"Liberation Sans", sans-serif' fill="#e4e4e4" text-anchor="middle" textLength="24" lengthAdjust="spacingAndGlyphs">CROSS</text>
<text x="22.7" y="43.7" font-size="7.2" font-weight="bold" font-family='"Liberation Sans", sans-serif' fill="#e4e4e4" text-anchor="middle" textLength="30.5" lengthAdjust="spacingAndGlyphs">SECTION</text>
<rect x="13" y="13" width="22" height="21" fill="url(#dg)" shape-rendering="crispEdges"/>
<path d="M4.5 16.5 H25.5 V37.5 H4.5 Z M19.5 10.5 H40.5 V31.5 H19.5 Z M4.5 16.5 L19.5 10.5 M25.5 16.5 L40.5 10.5 M25.5 37.5 L40.5 31.5 M4.5 37.5 L19.5 31.5" fill="none" stroke="#e4e4e4" stroke-width="1.2"/>
</g>
<rect x="718" y="336" width="46" height="48" fill="#989898" shape-rendering="crispEdges"/>
<rect x="719" y="337" width="44" height="46" fill="#6e6e6e" shape-rendering="crispEdges"/>
<g transform="translate(718 336) scale(1 1)">
<text x="22.7" y="8.6" font-size="7.2" font-weight="bold" font-family='"Liberation Sans", sans-serif' fill="#e4e4e4" text-anchor="middle" textLength="24" lengthAdjust="spacingAndGlyphs">CROSS</text>
<text x="22.7" y="43.7" font-size="7.2" font-weight="bold" font-family='"Liberation Sans", sans-serif' fill="#e4e4e4" text-anchor="middle" textLength="30.5" lengthAdjust="spacingAndGlyphs">SECTION</text>
<rect x="13" y="13" width="22" height="21" fill="url(#dg)" shape-rendering="crispEdges"/>
<path d="M4.5 16.5 H25.5 V37.5 H4.5 Z M19.5 10.5 H40.5 V31.5 H19.5 Z M4.5 16.5 L19.5 10.5 M25.5 16.5 L40.5 10.5 M25.5 37.5 L40.5 31.5 M4.5 37.5 L19.5 31.5" fill="none" stroke="#e4e4e4" stroke-width="1.2"/>
</g>
<rect x="1050" y="52" width="10" height="17" fill="#ff8080" shape-rendering="crispEdges"/>
<rect x="1050" y="69" width="10" height="17" fill="#ff9098" shape-rendering="crispEdges"/>
<rect x="1050" y="86" width="10" height="17" fill="#ffaf64" shape-rendering="crispEdges"/>
<rect x="1050" y="103" width="10" height="17" fill="#ffd8b0" shape-rendering="crispEdges"/>
<rect x="1050" y="120" width="10" height="17" fill="#ffd700" shape-rendering="crispEdges"/>
<rect x="1050" y="137" width="10" height="17" fill="#f0b41e" shape-rendering="crispEdges"/>
<rect x="1050" y="154" width="10" height="17" fill="#dc9632" shape-rendering="crispEdges"/>
<rect x="1050" y="171" width="10" height="17" fill="#c8c8c8" shape-rendering="crispEdges"/>
<rect x="1050" y="188" width="10" height="17" fill="#007848" shape-rendering="crispEdges"/>
<rect x="1050" y="205" width="10" height="17" fill="#00e696" shape-rendering="crispEdges"/>
<rect x="1050" y="222" width="10" height="17" fill="#14b4dc" shape-rendering="crispEdges"/>
<rect x="1050" y="239" width="10" height="17" fill="#1482f0" shape-rendering="crispEdges"/>
<rect x="1050" y="256" width="10" height="17" fill="#1446e6" shape-rendering="crispEdges"/>
<rect x="1050" y="273" width="10" height="17" fill="#4620e6" shape-rendering="crispEdges"/>
<rect x="1050" y="290" width="10" height="17" fill="#7800ff" shape-rendering="crispEdges"/>
<rect x="1050" y="307" width="10" height="17" fill="#9600ff" shape-rendering="crispEdges"/>
<text x="1065.5" y="65.5" font-size="13" fill="#fff" font-family='"Liberation Sans", sans-serif'  xml:space="preserve">62.5</text>
<text x="1065.5" y="82.5" font-size="13" fill="#fff" font-family='"Liberation Sans", sans-serif'  xml:space="preserve">57.5</text>
<text x="1065.5" y="99.5" font-size="13" fill="#fff" font-family='"Liberation Sans", sans-serif'  xml:space="preserve">52.5</text>
<text x="1065.5" y="116.5" font-size="13" fill="#fff" font-family='"Liberation Sans", sans-serif'  xml:space="preserve">47.5</text>
<text x="1065.5" y="133.5" font-size="13" fill="#fff" font-family='"Liberation Sans", sans-serif'  xml:space="preserve">42.5</text>
<text x="1065.5" y="150.5" font-size="13" fill="#fff" font-family='"Liberation Sans", sans-serif'  xml:space="preserve">37.5</text>
<text x="1065.5" y="167.5" font-size="13" fill="#fff" font-family='"Liberation Sans", sans-serif'  xml:space="preserve">32.5</text>
<text x="1065.5" y="184.5" font-size="13" fill="#fff" font-family='"Liberation Sans", sans-serif'  xml:space="preserve">27.5</text>
<text x="1065.5" y="201.5" font-size="13" fill="#fff" font-family='"Liberation Sans", sans-serif'  xml:space="preserve">22.5</text>
<text x="1065.5" y="218.5" font-size="13" fill="#fff" font-family='"Liberation Sans", sans-serif'  xml:space="preserve">17.5</text>
<text x="1065.5" y="235.5" font-size="13" fill="#fff" font-family='"Liberation Sans", sans-serif'  xml:space="preserve">12.5</text>
<text x="1065.5" y="252.5" font-size="13" fill="#fff" font-family='"Liberation Sans", sans-serif'  xml:space="preserve">7.5</text>
<text x="1065.5" y="269.5" font-size="13" fill="#fff" font-family='"Liberation Sans", sans-serif'  xml:space="preserve">2.5</text>
<text x="1065.5" y="286.5" font-size="13" fill="#fff" font-family='"Liberation Sans", sans-serif' xml:space="preserve"><tspan textLength="7.50" lengthAdjust="spacingAndGlyphs">-</tspan><tspan textLength="18.07" lengthAdjust="spacingAndGlyphs">2.5</tspan></text>
<text x="1065.5" y="303.5" font-size="13" fill="#fff" font-family='"Liberation Sans", sans-serif' xml:space="preserve"><tspan textLength="7.50" lengthAdjust="spacingAndGlyphs">-</tspan><tspan textLength="18.07" lengthAdjust="spacingAndGlyphs">7.5</tspan></text>
<text x="1065.5" y="320.5" font-size="13" fill="#fff" font-family='"Liberation Sans", sans-serif' xml:space="preserve"><tspan textLength="7.50" lengthAdjust="spacingAndGlyphs">-</tspan><tspan textLength="25.30" lengthAdjust="spacingAndGlyphs">12.5</tspan></text>
<rect x="573" y="386" width="562" height="385.5" fill="#000" />
<line x1="573" y1="386.5" x2="1135" y2="386.5" stroke="#e8e8e8" stroke-width="1" stroke-dasharray="1 1" shape-rendering="crispEdges"/>
<line x1="573.5" y1="386" x2="573.5" y2="771.5" stroke="#e8e8e8" stroke-width="1" stroke-dasharray="1 1" shape-rendering="crispEdges"/>
<line x1="573" y1="771" x2="1135" y2="771" stroke="#e8e8e8" stroke-width="1" stroke-dasharray="1 1" shape-rendering="crispEdges"/>
<line x1="1134.5" y1="386" x2="1134.5" y2="771.5" stroke="#e8e8e8" stroke-width="1" stroke-dasharray="1 1" shape-rendering="crispEdges"/>
<rect x="1046" y="771.5" width="76" height="3.5" fill="#000" />
<line x1="1045" y1="775" x2="1122" y2="775" stroke="#e8e8e8" stroke-width="1" stroke-dasharray="1 1" shape-rendering="crispEdges"/>
<line x1="1045.5" y1="771" x2="1045.5" y2="775" stroke="#e8e8e8" stroke-width="1" stroke-dasharray="1 1" shape-rendering="crispEdges"/>
<line x1="1121.5" y1="771" x2="1121.5" y2="775" stroke="#e8e8e8" stroke-width="1" stroke-dasharray="1 1" shape-rendering="crispEdges"/>
<polygon points="624.5,682.5 624.5,632 651.25,632 653.75,627.5 653.75,608.75 721.25,608.75 723,605 723,591.25 748.75,591.25 748.75,608.75 805,608.75 805,620 857,620 861.25,615.5 861.25,608.75 867,608.75 869.5,602.5 869.5,591.25 983,591.25 985.5,585 985.5,580 993.75,580 993.75,591.25 1028,591.25 1028,608.75 1050.5,608.75 1050.5,682.5" fill="#085a14" />
<polygon points="653.75,608.75 721.25,608.75 723,605 723,591.25 748.75,591.25 748.75,608.75 773,608.75 773,616.25 767.5,625 760,632.5 755,636.25 740,638.75 722.5,638.75 680,638.75 651.25,637.5 645,635 640,633 625,633 625,632 651.25,632 653.75,627.5" fill="#0a8c1e" />
<polygon points="888.75,591.25 891.25,602.5 900,612.5 912.5,623.75 925,630 935,642.5 947.5,652.5 965,658.75 982.5,657.5 992.5,650 1000,637.5 1007.5,622.5 1015,607.5 1022,591.25 993.75,591.25 993.75,585 985.5,585 983,589.5 983,591.25" fill="#0a8c1e" />
<path d="M624.5 413.5 H1050.5 V695.5 H624.5 Z M624.5 667.5 h12 M1050.5 667.5 h-12 M624.5 639.5 h12 M1050.5 639.5 h-12 M624.5 610.5 h12 M1050.5 610.5 h-12 M624.5 582.5 h12 M1050.5 582.5 h-12 M624.5 554.5 h12 M1050.5 554.5 h-12 M624.5 526.5 h12 M1050.5 526.5 h-12 M624.5 498.5 h12 M1050.5 498.5 h-12 M624.5 469.5 h12 M1050.5 469.5 h-12 M624.5 441.5 h12 M1050.5 441.5 h-12 M677.5 413.5 v8 M677.5 695.5 v-8 M731.5 413.5 v8 M731.5 695.5 v-8 M784.5 413.5 v8 M784.5 695.5 v-8 M837.5 413.5 v8 M837.5 695.5 v-8 M890.5 413.5 v8 M890.5 695.5 v-8 M944.5 413.5 v8 M944.5 695.5 v-8 M997.5 413.5 v8 M997.5 695.5 v-8 " fill="none" stroke="#fff" stroke-width="1" shape-rendering="crispEdges"/>
<text x="620.5" y="695" font-size="10" fill="#fff" font-family='"Liberation Sans", sans-serif' text-anchor="end"  xml:space="preserve">0</text>
<text x="620.5" y="638.6" font-size="10" fill="#fff" font-family='"Liberation Sans", sans-serif' text-anchor="end"  xml:space="preserve">4</text>
<text x="620.5" y="582.2" font-size="10" fill="#fff" font-family='"Liberation Sans", sans-serif' text-anchor="end"  xml:space="preserve">8</text>
<text x="620.5" y="525.8" font-size="10" fill="#fff" font-family='"Liberation Sans", sans-serif' text-anchor="end"  xml:space="preserve">12</text>
<text x="620.5" y="469.4" font-size="10" fill="#fff" font-family='"Liberation Sans", sans-serif' text-anchor="end"  xml:space="preserve">16</text>
<text x="620.5" y="413" font-size="10" fill="#fff" font-family='"Liberation Sans", sans-serif' text-anchor="end"  xml:space="preserve">20</text>
<text x="624.5" y="707" font-size="10.5" fill="#fff" font-family='"Liberation Sans", sans-serif' text-anchor="middle"  xml:space="preserve">0.0</text>
<text x="731" y="707" font-size="10.5" fill="#fff" font-family='"Liberation Sans", sans-serif' text-anchor="middle"  xml:space="preserve">7.2</text>
<text x="837.5" y="707" font-size="10.5" fill="#fff" font-family='"Liberation Sans", sans-serif' text-anchor="middle"  xml:space="preserve">14.3</text>
<text x="944" y="707" font-size="10.5" fill="#fff" font-family='"Liberation Sans", sans-serif' text-anchor="middle"  xml:space="preserve">21.5</text>
<text x="1051" y="707" font-size="10.5" fill="#fff" font-family='"Liberation Sans", sans-serif' text-anchor="end"  xml:space="preserve">28</text>
<text x="804.5" y="715" font-size="10.5" fill="#fff" font-family='"Liberation Sans", sans-serif' textLength="67" lengthAdjust="spacingAndGlyphs"  xml:space="preserve">Distance in km</text>
<text transform="translate(605 601.5) rotate(-90)" font-size="13" font-family='"Liberation Serif", serif' fill="#fff" textLength="95" lengthAdjust="spacingAndGlyphs">km above MSL</text>
<text x="584.5" y="404.5" font-size="18.5" fill="#ffff00" font-family='"Liberation Sans", sans-serif' xml:space="preserve"><tspan textLength="20.28" lengthAdjust="spacingAndGlyphs">22</tspan><tspan textLength="9.11" lengthAdjust="spacingAndGlyphs">-</tspan><tspan textLength="30.42" lengthAdjust="spacingAndGlyphs">aug</tspan><tspan textLength="9.11" lengthAdjust="spacingAndGlyphs">-</tspan><tspan textLength="116.58" lengthAdjust="spacingAndGlyphs">1997,17:05:00</tspan></text>
<text x="781.5" y="404.5" font-size="18.5" fill="#fff" font-family='"Liberation Sans", sans-serif' xml:space="preserve"><tspan textLength="104.17" lengthAdjust="spacingAndGlyphs">Planar cross</tspan><tspan textLength="9.37" lengthAdjust="spacingAndGlyphs">-</tspan><tspan textLength="197.96" lengthAdjust="spacingAndGlyphs">section plot.  Contour of</tspan></text>
<text x="584.5" y="431.5" font-size="18.5" fill="#fff" font-family='"Liberation Sans", sans-serif' textLength="228" lengthAdjust="spacingAndGlyphs"  xml:space="preserve">radialvelocity using: rhb_3d.</text>
<rect x="1050.5" y="413" width="84.5" height="1" fill="#a8a8a8" shape-rendering="crispEdges"/>
<text x="1052.5" y="427.5" font-size="12.5" fill="#fff" font-family='"Liberation Sans", sans-serif' textLength="74.5" lengthAdjust="spacingAndGlyphs"  xml:space="preserve">radialvelocity</text>
<rect x="1050.5" y="719" width="84.5" height="1" fill="#a8a8a8" shape-rendering="crispEdges"/>
<rect x="579" y="720" width="46" height="48" fill="#8c8c94" shape-rendering="crispEdges"/>
<rect x="580" y="721" width="44" height="46" fill="#191970" shape-rendering="crispEdges"/>
<g transform="translate(579.5 720.5) scale(1 1)">
<path d="M6 11 C11 6 17 6 23 9 S32 12 38 8 L7 39 C13 33 19 34 25 37 S34 40 39 34" fill="none" stroke="#ffff00" stroke-width="1.5" stroke-linejoin="round" stroke-linecap="round"/>
<path d="M9 9.5 C14 6.5 18 7 23 9 S31 11.5 36 9.5 C31 13.5 27 12.5 22 11 S14 8.5 9 9.5Z M10 38 C14 34 19 34.5 25 37 S33 39.5 37 36.5 C33 41.5 28 40.5 24 39 S14 36 10 38Z" fill="#ffff00"/>
</g>
<rect x="626" y="720" width="46" height="48" fill="#8c8c94" shape-rendering="crispEdges"/>
<rect x="627" y="721" width="44" height="46" fill="#191970" shape-rendering="crispEdges"/>
<g transform="translate(626 720) scale(1 1)">
<text x="22.7" y="8.6" font-size="7.2" font-weight="bold" font-family='"Liberation Sans", sans-serif' fill="#ffff00" text-anchor="middle" textLength="24" lengthAdjust="spacingAndGlyphs">CROSS</text>
<text x="22.7" y="43.7" font-size="7.2" font-weight="bold" font-family='"Liberation Sans", sans-serif' fill="#ffff00" text-anchor="middle" textLength="30.5" lengthAdjust="spacingAndGlyphs">SECTION</text>
<rect x="13" y="13" width="22" height="21" fill="url(#dy)" shape-rendering="crispEdges"/>
<path d="M4.5 16.5 H25.5 V37.5 H4.5 Z M19.5 10.5 H40.5 V31.5 H19.5 Z M4.5 16.5 L19.5 10.5 M25.5 16.5 L40.5 10.5 M25.5 37.5 L40.5 31.5 M4.5 37.5 L19.5 31.5" fill="none" stroke="#ffff00" stroke-width="1.2"/>
</g>
<rect x="673" y="720" width="46" height="48" fill="#989898" shape-rendering="crispEdges"/>
<rect x="674" y="721" width="44" height="46" fill="#6e6e6e" shape-rendering="crispEdges"/>
<g transform="translate(673 720) scale(1 1)">
<text x="22.7" y="8.6" font-size="7.2" font-weight="bold" font-family='"Liberation Sans", sans-serif' fill="#e4e4e4" text-anchor="middle" textLength="24" lengthAdjust="spacingAndGlyphs">CROSS</text>
<text x="22.7" y="43.7" font-size="7.2" font-weight="bold" font-family='"Liberation Sans", sans-serif' fill="#e4e4e4" text-anchor="middle" textLength="30.5" lengthAdjust="spacingAndGlyphs">SECTION</text>
<rect x="13" y="13" width="22" height="21" fill="url(#dg)" shape-rendering="crispEdges"/>
<path d="M4.5 16.5 H25.5 V37.5 H4.5 Z M19.5 10.5 H40.5 V31.5 H19.5 Z M4.5 16.5 L19.5 10.5 M25.5 16.5 L40.5 10.5 M25.5 37.5 L40.5 31.5 M4.5 37.5 L19.5 31.5" fill="none" stroke="#e4e4e4" stroke-width="1.2"/>
</g>
<rect x="720" y="720" width="46" height="48" fill="#989898" shape-rendering="crispEdges"/>
<rect x="721" y="721" width="44" height="46" fill="#6e6e6e" shape-rendering="crispEdges"/>
<g transform="translate(720 720) scale(1 1)">
<text x="22.7" y="8.6" font-size="7.2" font-weight="bold" font-family='"Liberation Sans", sans-serif' fill="#e4e4e4" text-anchor="middle" textLength="24" lengthAdjust="spacingAndGlyphs">CROSS</text>
<text x="22.7" y="43.7" font-size="7.2" font-weight="bold" font-family='"Liberation Sans", sans-serif' fill="#e4e4e4" text-anchor="middle" textLength="30.5" lengthAdjust="spacingAndGlyphs">SECTION</text>
<rect x="13" y="13" width="22" height="21" fill="url(#dg)" shape-rendering="crispEdges"/>
<path d="M4.5 16.5 H25.5 V37.5 H4.5 Z M19.5 10.5 H40.5 V31.5 H19.5 Z M4.5 16.5 L19.5 10.5 M25.5 16.5 L40.5 10.5 M25.5 37.5 L40.5 31.5 M4.5 37.5 L19.5 31.5" fill="none" stroke="#e4e4e4" stroke-width="1.2"/>
</g>
<rect x="1052" y="436" width="10" height="11" fill="#ff0000" shape-rendering="crispEdges"/>
<rect x="1052" y="447" width="10" height="11" fill="#dc0000" shape-rendering="crispEdges"/>
<rect x="1052" y="458" width="10" height="11" fill="#960000" shape-rendering="crispEdges"/>
<rect x="1052" y="469" width="10" height="11" fill="#e65000" shape-rendering="crispEdges"/>
<rect x="1052" y="480" width="10" height="11" fill="#ff8200" shape-rendering="crispEdges"/>
<rect x="1052" y="491" width="10" height="11" fill="#ff5050" shape-rendering="crispEdges"/>
<rect x="1052" y="502" width="10" height="11" fill="#ff8c82" shape-rendering="crispEdges"/>
<rect x="1052" y="513" width="10" height="11" fill="#ffbebe" shape-rendering="crispEdges"/>
<rect x="1052" y="524" width="10" height="11" fill="#ffff00" shape-rendering="crispEdges"/>
<rect x="1052" y="535" width="10" height="11" fill="#ffb41e" shape-rendering="crispEdges"/>
<rect x="1052" y="546" width="10" height="11" fill="#dc965a" shape-rendering="crispEdges"/>
<rect x="1052" y="557" width="10" height="11" fill="#b4500a" shape-rendering="crispEdges"/>
<rect x="1052" y="568" width="10" height="11" fill="#bebebe" shape-rendering="crispEdges"/>
<rect x="1052" y="579" width="10" height="11" fill="#085a14" shape-rendering="crispEdges"/>
<rect x="1052" y="590" width="10" height="11" fill="#0a8c1e" shape-rendering="crispEdges"/>
<rect x="1052" y="601" width="10" height="11" fill="#0aaa1e" shape-rendering="crispEdges"/>
<rect x="1052" y="612" width="10" height="11" fill="#00ff00" shape-rendering="crispEdges"/>
<rect x="1052" y="623" width="10" height="11" fill="#00beff" shape-rendering="crispEdges"/>
<rect x="1052" y="634" width="10" height="11" fill="#0082ff" shape-rendering="crispEdges"/>
<rect x="1052" y="645" width="10" height="11" fill="#0000dc" shape-rendering="crispEdges"/>
<rect x="1052" y="656" width="10" height="11" fill="#0014aa" shape-rendering="crispEdges"/>
<rect x="1052" y="667" width="10" height="11" fill="#000082" shape-rendering="crispEdges"/>
<rect x="1052" y="678" width="10" height="11" fill="#9696be" shape-rendering="crispEdges"/>
<rect x="1052" y="689" width="10" height="11" fill="#5a5a82" shape-rendering="crispEdges"/>
<rect x="1052" y="700" width="10" height="11" fill="#6e6e6e" shape-rendering="crispEdges"/>
<text x="1068" y="446.25" font-size="12.3" fill="#fff" font-family='"Liberation Sans", sans-serif'  xml:space="preserve">24.0</text>
<text x="1068" y="457.25" font-size="12.3" fill="#fff" font-family='"Liberation Sans", sans-serif'  xml:space="preserve">22.0</text>
<text x="1068" y="468.25" font-size="12.3" fill="#fff" font-family='"Liberation Sans", sans-serif'  xml:space="preserve">20.0</text>
<text x="1068" y="479.25" font-size="12.3" fill="#fff" font-family='"Liberation Sans", sans-serif'  xml:space="preserve">18.0</text>
<text x="1068" y="490.25" font-size="12.3" fill="#fff" font-family='"Liberation Sans", sans-serif'  xml:space="preserve">16.0</text>
<text x="1068" y="501.25" font-size="12.3" fill="#fff" font-family='"Liberation Sans", sans-serif'  xml:space="preserve">14.0</text>
<text x="1068" y="512.25" font-size="12.3" fill="#fff" font-family='"Liberation Sans", sans-serif'  xml:space="preserve">12.0</text>
<text x="1068" y="523.25" font-size="12.3" fill="#fff" font-family='"Liberation Sans", sans-serif'  xml:space="preserve">10.0</text>
<text x="1068" y="534.25" font-size="12.3" fill="#fff" font-family='"Liberation Sans", sans-serif'  xml:space="preserve">8.0</text>
<text x="1068" y="545.25" font-size="12.3" fill="#fff" font-family='"Liberation Sans", sans-serif'  xml:space="preserve">6.0</text>
<text x="1068" y="556.25" font-size="12.3" fill="#fff" font-family='"Liberation Sans", sans-serif'  xml:space="preserve">4.0</text>
<text x="1068" y="567.25" font-size="12.3" fill="#fff" font-family='"Liberation Sans", sans-serif'  xml:space="preserve">2.0</text>
<text x="1068" y="578.25" font-size="12.3" fill="#fff" font-family='"Liberation Sans", sans-serif'  xml:space="preserve">0.0</text>
<text x="1068" y="589.25" font-size="12.3" fill="#fff" font-family='"Liberation Sans", sans-serif' xml:space="preserve"><tspan textLength="7.80" lengthAdjust="spacingAndGlyphs">-</tspan><tspan textLength="17.10" lengthAdjust="spacingAndGlyphs">2.0</tspan></text>
<text x="1068" y="600.25" font-size="12.3" fill="#fff" font-family='"Liberation Sans", sans-serif' xml:space="preserve"><tspan textLength="7.80" lengthAdjust="spacingAndGlyphs">-</tspan><tspan textLength="17.10" lengthAdjust="spacingAndGlyphs">4.0</tspan></text>
<text x="1068" y="611.25" font-size="12.3" fill="#fff" font-family='"Liberation Sans", sans-serif' xml:space="preserve"><tspan textLength="7.80" lengthAdjust="spacingAndGlyphs">-</tspan><tspan textLength="17.10" lengthAdjust="spacingAndGlyphs">6.0</tspan></text>
<text x="1068" y="622.25" font-size="12.3" fill="#fff" font-family='"Liberation Sans", sans-serif' xml:space="preserve"><tspan textLength="7.80" lengthAdjust="spacingAndGlyphs">-</tspan><tspan textLength="17.10" lengthAdjust="spacingAndGlyphs">8.0</tspan></text>
<text x="1068" y="633.25" font-size="12.3" fill="#fff" font-family='"Liberation Sans", sans-serif' xml:space="preserve"><tspan textLength="7.80" lengthAdjust="spacingAndGlyphs">-</tspan><tspan textLength="23.94" lengthAdjust="spacingAndGlyphs">10.0</tspan></text>
<text x="1068" y="644.25" font-size="12.3" fill="#fff" font-family='"Liberation Sans", sans-serif' xml:space="preserve"><tspan textLength="7.80" lengthAdjust="spacingAndGlyphs">-</tspan><tspan textLength="23.94" lengthAdjust="spacingAndGlyphs">12.0</tspan></text>
<text x="1068" y="655.25" font-size="12.3" fill="#fff" font-family='"Liberation Sans", sans-serif' xml:space="preserve"><tspan textLength="7.80" lengthAdjust="spacingAndGlyphs">-</tspan><tspan textLength="23.94" lengthAdjust="spacingAndGlyphs">14.0</tspan></text>
<text x="1068" y="666.25" font-size="12.3" fill="#fff" font-family='"Liberation Sans", sans-serif' xml:space="preserve"><tspan textLength="7.80" lengthAdjust="spacingAndGlyphs">-</tspan><tspan textLength="23.94" lengthAdjust="spacingAndGlyphs">16.0</tspan></text>
<text x="1068" y="677.25" font-size="12.3" fill="#fff" font-family='"Liberation Sans", sans-serif' xml:space="preserve"><tspan textLength="7.80" lengthAdjust="spacingAndGlyphs">-</tspan><tspan textLength="23.94" lengthAdjust="spacingAndGlyphs">18.0</tspan></text>
<text x="1068" y="688.25" font-size="12.3" fill="#fff" font-family='"Liberation Sans", sans-serif' xml:space="preserve"><tspan textLength="7.80" lengthAdjust="spacingAndGlyphs">-</tspan><tspan textLength="23.94" lengthAdjust="spacingAndGlyphs">20.0</tspan></text>
<text x="1068" y="699.25" font-size="12.3" fill="#fff" font-family='"Liberation Sans", sans-serif' xml:space="preserve"><tspan textLength="7.80" lengthAdjust="spacingAndGlyphs">-</tspan><tspan textLength="23.94" lengthAdjust="spacingAndGlyphs">22.0</tspan></text>
<text x="1068" y="710.25" font-size="12.3" fill="#fff" font-family='"Liberation Sans", sans-serif' xml:space="preserve"><tspan textLength="7.80" lengthAdjust="spacingAndGlyphs">-</tspan><tspan textLength="23.94" lengthAdjust="spacingAndGlyphs">24.0</tspan></text>
</svg>
</body></html>
